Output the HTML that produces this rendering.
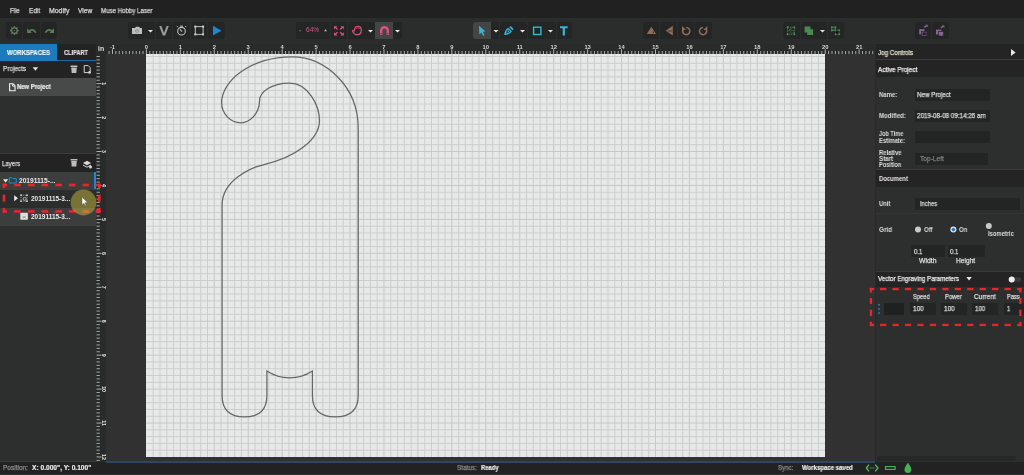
<!DOCTYPE html>
<html><head><meta charset="utf-8">
<style>
*{margin:0;padding:0;box-sizing:border-box}
html,body{width:1024px;height:475px;overflow:hidden;background:#2b2d2d;font-family:"Liberation Sans",sans-serif;}
.a{position:absolute}
.t{position:absolute;white-space:nowrap;line-height:1;font-size:7px;color:#dcdcdc;will-change:transform;z-index:5;transform-origin:0 0}
.b{font-weight:bold}
#menubar{left:0;top:0;width:1024px;height:18px;background:#212121}
#toolbar{left:0;top:18px;width:1024px;height:26px;background:#2b2d2d}
.grp{position:absolute;top:22px;height:17px;background:#242626;border-radius:3px}
.sep{position:absolute;top:22px;width:1px;height:17px;background:#2b2d2d}
.act{position:absolute;top:22px;height:17px;background:#444646}
.inp{position:absolute;background:#232424}
svg{position:absolute;overflow:visible}
</style></head><body>
<!-- MENUBAR -->
<div id="menubar" class="a"></div>

<!-- TOOLBAR -->
<div id="toolbar" class="a"></div>
<!-- group1 -->
<div class="grp" style="left:6px;width:51px"></div>
<div class="sep" style="left:22px"></div>
<div class="sep" style="left:40px"></div>
<!-- group2 -->
<div class="grp" style="left:128px;width:97px"></div>
<div class="sep" style="left:155px"></div>
<div class="sep" style="left:172px"></div>
<div class="sep" style="left:190px"></div>
<div class="sep" style="left:207px"></div>
<!-- group3 -->
<div class="grp" style="left:296px;width:106px"></div>
<div class="sep" style="left:330px"></div>
<div class="sep" style="left:347px"></div>
<div class="act" style="left:375px;width:18px"></div>
<!-- group4 -->
<div class="grp" style="left:473px;width:99px"></div>
<div class="act" style="left:473px;width:18px;border-radius:3px 0 0 3px"></div>
<div class="sep" style="left:499px"></div>
<div class="sep" style="left:527px"></div>
<div class="sep" style="left:556px"></div>
<!-- group5 -->
<div class="grp" style="left:643px;width:69px"></div>
<div class="sep" style="left:659px"></div>
<div class="sep" style="left:677px"></div>
<div class="sep" style="left:694px"></div>
<!-- group6 -->
<div class="grp" style="left:783px;width:61px"></div>
<div class="sep" style="left:800px"></div>
<div class="sep" style="left:827px"></div>
<!-- group7 -->
<div class="grp" style="left:915px;width:34px"></div>
<div class="sep" style="left:931px"></div>

<!-- toolbar icons -->
<svg style="left:0;top:0" width="1024" height="44">
 <!-- gear -->
 <g fill="#5b7d58">
  <circle cx="14.4" cy="30.6" r="3.4"/>
  <g stroke="#5b7d58" stroke-width="1.5">
   <line x1="14.4" y1="26.2" x2="14.4" y2="35"/><line x1="10" y1="30.6" x2="18.8" y2="30.6"/>
   <line x1="11.3" y1="27.5" x2="17.5" y2="33.7"/><line x1="17.5" y1="27.5" x2="11.3" y2="33.7"/>
  </g>
 </g>
 <circle cx="14.4" cy="30.6" r="2.1" fill="#242626"/>
 <circle cx="14.4" cy="30.6" r="0.7" fill="#5b7d58"/>
 <!-- undo -->
 <path d="M27.2 28.3 L27.2 32.9 L31.8 32.9 Z" fill="#5b7d58"/>
 <path d="M28.8 31.6 Q32.6 27.6 35.9 32.6" fill="none" stroke="#5b7d58" stroke-width="1.7"/>
 <!-- redo -->
 <path d="M54 28.3 L54 32.9 L49.4 32.9 Z" fill="#5b7d58"/>
 <path d="M52.4 31.6 Q48.6 27.6 45.3 32.6" fill="none" stroke="#5b7d58" stroke-width="1.7"/>
 <!-- camera -->
 <path d="M132 28 h3 l1 -1.2 h3 l1 1.2 h2 v6 h-10 z" fill="#bdbdbd"/>
 <circle cx="137" cy="31" r="1.8" fill="#8a8a8a"/><circle cx="137" cy="31" r="0.9" fill="#bdbdbd"/>
 <path d="M148 30 h5 l-2.5 2.6 z" fill="#e8e8e8"/>
 <!-- V -->
 <path d="M159.2 26 h2.2 l2.6 7 l2.6 -7 h2.2 l-3.6 9.5 h-2.4 z" fill="#9a9a9a"/>
 <!-- timer -->
 <circle cx="181.5" cy="31.2" r="3.8" fill="none" stroke="#bdbdbd" stroke-width="1.1"/>
 <line x1="182" y1="31.6" x2="180" y2="29.4" stroke="#bdbdbd" stroke-width="1.1"/>
 <line x1="180" y1="26.2" x2="183" y2="26.2" stroke="#bdbdbd" stroke-width="1"/>
 <line x1="185.2" y1="27" x2="186.2" y2="26" stroke="#bdbdbd" stroke-width="1"/>
 <line x1="177.8" y1="27" x2="176.8" y2="26" stroke="#bdbdbd" stroke-width="1"/>
 <!-- bbox -->
 <rect x="195.3" y="26.6" width="7.8" height="7.8" fill="none" stroke="#bdbdbd" stroke-width="1"/>
 <rect x="194.3" y="25.6" width="2" height="2" fill="#d0d0d0"/><rect x="202.1" y="25.6" width="2" height="2" fill="#d0d0d0"/>
 <rect x="194.3" y="33.4" width="2" height="2" fill="#d0d0d0"/><rect x="202.1" y="33.4" width="2" height="2" fill="#d0d0d0"/>
 <!-- play -->
 <path d="M213 25.8 L221.5 30.7 L213 35.6 Z" fill="#1c86d0"/>
 <!-- zoom -->
 <rect x="299.5" y="30.3" width="1.2" height="1" fill="#9a9a9a"/>
 <path d="M324 31.2 h3 l-1.5 -2 z" fill="#bdbdbd"/>
 <!-- fit -->
 <g fill="#e0527e">
  <path d="M334 26.2 h3.2 l-1 1 l1.8 1.8 l-0.9 0.9 l-1.8 -1.8 l-1.3 1.3 z"/>
  <path d="M343.8 26.2 h-3.2 l1 1 l-1.8 1.8 l0.9 0.9 l1.8 -1.8 l1.3 1.3 z"/>
  <path d="M334 35.4 h3.2 l-1 -1 l1.8 -1.8 l-0.9 -0.9 l-1.8 1.8 l-1.3 -1.3 z"/>
  <path d="M343.8 35.4 h-3.2 l1 -1 l-1.8 -1.8 l0.9 -0.9 l1.8 1.8 l1.3 -1.3 z"/>
 </g>
 <!-- hand -->
 <path d="M355.2 34.4 Q352.6 32.4 352.4 31.2 Q352.8 30 354.4 30.8 L354.6 28.6 Q355.2 26.4 357.6 26.3 Q360.8 26.4 361.2 29 L361.2 31.4 Q360.8 34.6 357.8 34.9 Z" fill="none" stroke="#e0527e" stroke-width="1.15"/><path d="M355.6 28.4 Q357.8 27.4 360.2 28.6" fill="none" stroke="#e0527e" stroke-width="0.8"/>
 <path d="M368 30 h5 l-2.5 2.6 z" fill="#e8e8e8"/>
 <!-- magnet -->
 <path d="M380 35 v-4.5 a4.5 4.5 0 0 1 9 0 v4.5 h-2.4 v-4.5 a2.1 2.1 0 0 0 -4.2 0 v4.5 z" fill="#e0527e"/>
 <circle cx="381.2" cy="33.6" r="0.6" fill="#333"/><circle cx="387.8" cy="33.6" r="0.6" fill="#333"/>
 <path d="M395 30 h5 l-2.5 2.6 z" fill="#e8e8e8"/>
 <!-- select -->
 <path d="M479 25.8 L485.5 31.5 L482.8 31.8 L484.6 35 L483 35.8 L481.3 32.6 L479.4 34.4 Z" fill="#3fb3d6"/>
 <path d="M493.5 30 h5 l-2.5 2.6 z" fill="#e8e8e8"/>
 <!-- pen -->
 <path d="M504.9 34.4 C505.3 31.6 506.4 29.6 508.2 28.5 L511.1 31.4 C510 33.2 507.8 34 504.9 34.4 Z" fill="none" stroke="#3fb3d6" stroke-width="1.3" stroke-linejoin="round"/>
 <circle cx="508.4" cy="31.2" r="0.75" fill="#3fb3d6"/>
 <line x1="505.2" y1="34.1" x2="507.9" y2="31.6" stroke="#3fb3d6" stroke-width="0.7"/>
 <path d="M509.4 27.3 L510.6 26.1 L513.6 29.1 L512.4 30.3 Z" fill="#3fb3d6"/>
 <path d="M520 30 h5 l-2.5 2.6 z" fill="#e8e8e8"/>
 <!-- rect -->
 <rect x="533.6" y="27.2" width="7.3" height="7.3" fill="none" stroke="#3fb3d6" stroke-width="1.4"/>
 <path d="M548 30 h5 l-2.5 2.6 z" fill="#e8e8e8"/>
 <!-- T -->
 <path d="M560 26.2 h7.6 v2 h-2.7 v7.2 h-2.2 v-7.2 h-2.7 z" fill="#3fb3d6"/>
 <!-- brown icons -->
 <path d="M646.8 34 L651.4 26.8 L656 34 Z" fill="#8f6c55"/><circle cx="653.4" cy="32.2" r="0.6" fill="#1e1e1e"/>
 <path d="M672.8 25.8 L665.6 30.8 L672.8 35.4 Z" fill="#8f6c55"/>
 <path d="M672.2 31 L667.6 31" stroke="#1e1e1e" stroke-width="0.6"/>
 <path d="M683.3 29 a3.6 3.6 0 1 0 3 -1.5" fill="none" stroke="#8f6c55" stroke-width="1.6"/>
 <path d="M682 26 v4 h4 z" fill="#8f6c55"/>
 <path d="M706 29 a3.6 3.6 0 1 1 -3 -1.5" fill="none" stroke="#8f6c55" stroke-width="1.6"/>
 <path d="M707.3 26 v4 h-4 z" fill="#8f6c55"/>
 <!-- green icons -->
 <g fill="#4a8a4e">
  <circle cx="787.6" cy="27.2" r="1"/><circle cx="794.4" cy="27.2" r="1"/>
  <circle cx="787.6" cy="34.2" r="1"/><circle cx="794.4" cy="34.2" r="1"/>
 </g>
 <rect x="787.6" y="27.2" width="6.8" height="7" fill="none" stroke="#4a8a4e" stroke-width="0.9" stroke-dasharray="1.4 0.9"/>
 <path d="M788.6 31 L791.4 28.2" stroke="#4a8a4e" stroke-width="1"/>
 <circle cx="792" cy="31.9" r="1.5" fill="#151515" stroke="#4a8a4e" stroke-width="0.6"/>
 <path d="M804.6 26.6 h5.8 v2.6 h2.7 v5.9 h-5.9 v-2.5 h-2.6 z" fill="#4a8a4e"/>
 <path d="M820 30 h5 l-2.5 2.6 z" fill="#e0e0e0"/>
 <g fill="#4a8a4e">
  <circle cx="831.8" cy="27.2" r="1"/><circle cx="835.4" cy="27.2" r="1"/>
  <circle cx="831.8" cy="30.6" r="1"/><circle cx="839.2" cy="30.2" r="1"/>
  <circle cx="835.6" cy="34.2" r="1"/><circle cx="839.2" cy="34.2" r="1"/>
 </g>
 <rect x="831.8" y="27.2" width="3.6" height="3.4" fill="none" stroke="#4a8a4e" stroke-width="0.8"/>
 <rect x="835.6" y="30.2" width="3.6" height="4" fill="none" stroke="#4a8a4e" stroke-width="0.8" stroke-dasharray="1 0.7"/>
 <path d="M832.6 31 L835 28.4" stroke="#4a8a4e" stroke-width="0.9"/>
 <circle cx="836.8" cy="32.2" r="1.3" fill="#151515"/>
 <!-- purple -->
 <rect x="919.2" y="29.2" width="5.2" height="5.2" fill="#8a6296"/>
 <rect x="921.6" y="31.4" width="5.2" height="4.6" fill="#8a6296" stroke="#242626" stroke-width="0.7"/>
 <rect x="922.6" y="32.4" width="3.2" height="2.6" fill="#1c1c1c"/>
 <path d="M924.2 27.4 l2.6 -1.8" stroke="#8a6296" stroke-width="1.4"/>
 <path d="M925.6 25.2 h1.8 v1.8" fill="none" stroke="#8a6296" stroke-width="0.9"/>
 <rect x="936" y="29.6" width="5.4" height="4.8" fill="#8a6296"/>
 <rect x="938.4" y="31.6" width="5.2" height="4.4" fill="#8a6296" stroke="#242626" stroke-width="0.7"/>
 <path d="M940.8 28 l2.6 -1.8" stroke="#8a6296" stroke-width="1.4"/>
 <path d="M942.2 25.8 h1.8 v1.8" fill="none" stroke="#8a6296" stroke-width="0.9"/>
</svg>

<!-- LEFT PANEL -->
<div class="a" style="left:0;top:44px;width:96px;height:417px;background:#2d2f2f"></div>
<div class="a" style="left:0;top:44px;width:57px;height:17px;background:#1b7bbd"></div>
<div class="a" style="left:57px;top:44px;width:39px;height:16px;background:#232323"></div>
<div class="a" style="left:57px;top:60px;width:39px;height:1px;background:#1b6aa0"></div>
<!-- projects header -->
<div class="a" style="left:0;top:61px;width:96px;height:17px;background:#232323"></div>
<div class="a" style="left:78px;top:78px;width:18px;height:0"></div>
<!-- new project row -->
<div class="a" style="left:0;top:78px;width:96px;height:18px;background:#484a4a"></div>
<!-- layers header -->
<div class="a" style="left:0;top:153px;width:96px;height:1px;background:#3a3c3c"></div>
<div class="a" style="left:0;top:154px;width:96px;height:18px;background:#232323"></div>
<!-- layer rows -->
<div class="a" style="left:0;top:172px;width:96px;height:18px;background:#3c3e3e"></div>
<div class="a" style="left:94px;top:172px;width:2px;height:17px;background:#1d8ad6"></div>
<div class="a" style="left:0;top:190px;width:96px;height:18px;background:#2b2d2d"></div>
<div class="a" style="left:0;top:207.5px;width:96px;height:18.3px;background:#3c3e3e"></div>

<svg style="left:0;top:44px" width="106" height="417">
 <!-- projects caret -->
 <path d="M32.6 23.2 h5.6 l-2.8 3.6 z" fill="#e0e0e0"/>
 <!-- trash -->
 <g fill="#bdbdbd"><rect x="70.5" y="21.6" width="7" height="1.4" rx="0.5"/><path d="M71.2 23.6 h5.6 l-0.5 5.4 h-4.6 z"/></g>
 <!-- new file -->
 <path d="M84.2 21.6 h4 l2 2 v5 h-6 z" fill="none" stroke="#d0d0d0" stroke-width="1"/>
 <circle cx="89.6" cy="28.4" r="1.4" fill="#d0d0d0"/>
 <!-- new project doc icon -->
 <path d="M9.6 39.8 h3.4 l2 2 v4.9 h-5.4 z" fill="none" stroke="#f0f0f0" stroke-width="1.1"/><path d="M12.6 39.8 v2.4 h2.4" fill="none" stroke="#f0f0f0" stroke-width="0.8"/>
 <!-- layers header icons -->
 <g fill="#bdbdbd"><rect x="70.5" y="115" width="7" height="1.4" rx="0.5"/><path d="M71.2 117 h5.6 l-0.5 5.4 h-4.6 z"/></g>
 <path d="M83 119 l4 -2.2 l4 2.2 l-4 2.2 z" fill="#d8d8d8"/>
 <path d="M83 121 l4 2.2 l4 -2.2" fill="none" stroke="#d8d8d8" stroke-width="1"/>
 <circle cx="90.5" cy="123" r="1.5" fill="#d8d8d8"/>
 <!-- row1 caret + folder -->
 <path d="M3 135.2 h5.2 l-2.6 3.3 z" fill="#e8e8e8"/>
 <path d="M9.3 133.7 h2.6 l0.9 0.9 h3.5 v4.4 h-7 z" fill="none" stroke="#1d8ad6" stroke-width="1"/>
 <!-- row2 caret + icon -->
 <path d="M14.2 151.2 v6 l3.8 -3 z" fill="#e8e8e8"/>
 <g fill="#cfcfcf">
  <rect x="20.2" y="150.4" width="1.6" height="1.6"/><rect x="26.2" y="150.4" width="1.6" height="1.6"/>
  <rect x="20.2" y="156.4" width="1.6" height="1.6"/><rect x="26.2" y="156.4" width="1.6" height="1.6"/>
 </g>
 <rect x="21" y="151.2" width="6" height="6" fill="none" stroke="#cfcfcf" stroke-width="0.7" stroke-dasharray="1 0.9"/>
 <circle cx="24.6" cy="154.8" r="1.5" fill="none" stroke="#cfcfcf" stroke-width="0.8"/>
 <!-- row3 icon -->
 <rect x="20.3" y="168.8" width="7.6" height="6.9" rx="0.6" fill="#e0e0e0"/>
 <rect x="22.6" y="172.6" width="3" height="1" fill="#777"/>
</svg>

<!-- red dashed box left -->
<svg style="left:0;top:0;z-index:11" width="110" height="475">
  <circle cx="83.5" cy="202.5" r="12.9" fill="#d6c440" fill-opacity="0.46"/>
 <path d="M82 197 v8 l1.9 -1.8 l1.2 2.6 l1 -0.5 l-1.2 -2.5 l2.6 -0.2 z" fill="#ffffff" stroke="#444" stroke-width="0.4"/>
</svg>

<!-- CANVAS AREA -->
<div class="a" style="left:106px;top:54px;width:769px;height:407px;background:#313131"></div>
<div class="a" style="left:106px;top:461px;width:769px;height:2px;background:#2f4662"></div>
<div class="a" style="left:0;top:461px;width:96px;height:1px;background:#3a3b3b"></div>
<!-- rulers -->
<div class="a" style="left:96px;top:44px;width:779px;height:10px;background:#292a2a"></div>
<div class="a" style="left:96px;top:54px;width:10px;height:407px;background:#292a2a"></div>
<svg style="left:106px;top:44px;will-change:transform" width="769" height="10" font-size="5.8" font-weight="bold" fill="#d4d4d4" font-family="Liberation Sans">
<line x1="3.07" y1="7" x2="3.07" y2="10" stroke="#a8a8a8" stroke-width="1"/>
<line x1="6.46" y1="5.3" x2="6.46" y2="10" stroke="#b4b4b4" stroke-width="1"/>
<text x="6.46" y="4.6" text-anchor="middle">-1</text>
<line x1="9.85" y1="7" x2="9.85" y2="10" stroke="#a8a8a8" stroke-width="1"/>
<line x1="13.25" y1="7" x2="13.25" y2="10" stroke="#a8a8a8" stroke-width="1"/>
<line x1="16.64" y1="7" x2="16.64" y2="10" stroke="#a8a8a8" stroke-width="1"/>
<line x1="20.04" y1="7" x2="20.04" y2="10" stroke="#a8a8a8" stroke-width="1"/>
<line x1="23.43" y1="7" x2="23.43" y2="10" stroke="#a8a8a8" stroke-width="1"/>
<line x1="26.82" y1="7" x2="26.82" y2="10" stroke="#a8a8a8" stroke-width="1"/>
<line x1="30.22" y1="7" x2="30.22" y2="10" stroke="#a8a8a8" stroke-width="1"/>
<line x1="33.61" y1="7" x2="33.61" y2="10" stroke="#a8a8a8" stroke-width="1"/>
<line x1="37.01" y1="7" x2="37.01" y2="10" stroke="#a8a8a8" stroke-width="1"/>
<line x1="40.4" y1="5.3" x2="40.4" y2="10" stroke="#b4b4b4" stroke-width="1"/>
<text x="40.4" y="4.6" text-anchor="middle">0</text>
<line x1="43.79" y1="7" x2="43.79" y2="10" stroke="#a8a8a8" stroke-width="1"/>
<line x1="47.19" y1="7" x2="47.19" y2="10" stroke="#a8a8a8" stroke-width="1"/>
<line x1="50.58" y1="7" x2="50.58" y2="10" stroke="#a8a8a8" stroke-width="1"/>
<line x1="53.98" y1="7" x2="53.98" y2="10" stroke="#a8a8a8" stroke-width="1"/>
<line x1="57.37" y1="7" x2="57.37" y2="10" stroke="#a8a8a8" stroke-width="1"/>
<line x1="60.76" y1="7" x2="60.76" y2="10" stroke="#a8a8a8" stroke-width="1"/>
<line x1="64.16" y1="7" x2="64.16" y2="10" stroke="#a8a8a8" stroke-width="1"/>
<line x1="67.55" y1="7" x2="67.55" y2="10" stroke="#a8a8a8" stroke-width="1"/>
<line x1="70.95" y1="7" x2="70.95" y2="10" stroke="#a8a8a8" stroke-width="1"/>
<line x1="74.34" y1="5.3" x2="74.34" y2="10" stroke="#b4b4b4" stroke-width="1"/>
<text x="74.34" y="4.6" text-anchor="middle">1</text>
<line x1="77.73" y1="7" x2="77.73" y2="10" stroke="#a8a8a8" stroke-width="1"/>
<line x1="81.13" y1="7" x2="81.13" y2="10" stroke="#a8a8a8" stroke-width="1"/>
<line x1="84.52" y1="7" x2="84.52" y2="10" stroke="#a8a8a8" stroke-width="1"/>
<line x1="87.92" y1="7" x2="87.92" y2="10" stroke="#a8a8a8" stroke-width="1"/>
<line x1="91.31" y1="7" x2="91.31" y2="10" stroke="#a8a8a8" stroke-width="1"/>
<line x1="94.7" y1="7" x2="94.7" y2="10" stroke="#a8a8a8" stroke-width="1"/>
<line x1="98.1" y1="7" x2="98.1" y2="10" stroke="#a8a8a8" stroke-width="1"/>
<line x1="101.49" y1="7" x2="101.49" y2="10" stroke="#a8a8a8" stroke-width="1"/>
<line x1="104.89" y1="7" x2="104.89" y2="10" stroke="#a8a8a8" stroke-width="1"/>
<line x1="108.28" y1="5.3" x2="108.28" y2="10" stroke="#b4b4b4" stroke-width="1"/>
<text x="108.28" y="4.6" text-anchor="middle">2</text>
<line x1="111.67" y1="7" x2="111.67" y2="10" stroke="#a8a8a8" stroke-width="1"/>
<line x1="115.07" y1="7" x2="115.07" y2="10" stroke="#a8a8a8" stroke-width="1"/>
<line x1="118.46" y1="7" x2="118.46" y2="10" stroke="#a8a8a8" stroke-width="1"/>
<line x1="121.86" y1="7" x2="121.86" y2="10" stroke="#a8a8a8" stroke-width="1"/>
<line x1="125.25" y1="7" x2="125.25" y2="10" stroke="#a8a8a8" stroke-width="1"/>
<line x1="128.64" y1="7" x2="128.64" y2="10" stroke="#a8a8a8" stroke-width="1"/>
<line x1="132.04" y1="7" x2="132.04" y2="10" stroke="#a8a8a8" stroke-width="1"/>
<line x1="135.43" y1="7" x2="135.43" y2="10" stroke="#a8a8a8" stroke-width="1"/>
<line x1="138.83" y1="7" x2="138.83" y2="10" stroke="#a8a8a8" stroke-width="1"/>
<line x1="142.22" y1="5.3" x2="142.22" y2="10" stroke="#b4b4b4" stroke-width="1"/>
<text x="142.22" y="4.6" text-anchor="middle">3</text>
<line x1="145.61" y1="7" x2="145.61" y2="10" stroke="#a8a8a8" stroke-width="1"/>
<line x1="149.01" y1="7" x2="149.01" y2="10" stroke="#a8a8a8" stroke-width="1"/>
<line x1="152.4" y1="7" x2="152.4" y2="10" stroke="#a8a8a8" stroke-width="1"/>
<line x1="155.8" y1="7" x2="155.8" y2="10" stroke="#a8a8a8" stroke-width="1"/>
<line x1="159.19" y1="7" x2="159.19" y2="10" stroke="#a8a8a8" stroke-width="1"/>
<line x1="162.58" y1="7" x2="162.58" y2="10" stroke="#a8a8a8" stroke-width="1"/>
<line x1="165.98" y1="7" x2="165.98" y2="10" stroke="#a8a8a8" stroke-width="1"/>
<line x1="169.37" y1="7" x2="169.37" y2="10" stroke="#a8a8a8" stroke-width="1"/>
<line x1="172.77" y1="7" x2="172.77" y2="10" stroke="#a8a8a8" stroke-width="1"/>
<line x1="176.16" y1="5.3" x2="176.16" y2="10" stroke="#b4b4b4" stroke-width="1"/>
<text x="176.16" y="4.6" text-anchor="middle">4</text>
<line x1="179.55" y1="7" x2="179.55" y2="10" stroke="#a8a8a8" stroke-width="1"/>
<line x1="182.95" y1="7" x2="182.95" y2="10" stroke="#a8a8a8" stroke-width="1"/>
<line x1="186.34" y1="7" x2="186.34" y2="10" stroke="#a8a8a8" stroke-width="1"/>
<line x1="189.74" y1="7" x2="189.74" y2="10" stroke="#a8a8a8" stroke-width="1"/>
<line x1="193.13" y1="7" x2="193.13" y2="10" stroke="#a8a8a8" stroke-width="1"/>
<line x1="196.52" y1="7" x2="196.52" y2="10" stroke="#a8a8a8" stroke-width="1"/>
<line x1="199.92" y1="7" x2="199.92" y2="10" stroke="#a8a8a8" stroke-width="1"/>
<line x1="203.31" y1="7" x2="203.31" y2="10" stroke="#a8a8a8" stroke-width="1"/>
<line x1="206.71" y1="7" x2="206.71" y2="10" stroke="#a8a8a8" stroke-width="1"/>
<line x1="210.1" y1="5.3" x2="210.1" y2="10" stroke="#b4b4b4" stroke-width="1"/>
<text x="210.1" y="4.6" text-anchor="middle">5</text>
<line x1="213.49" y1="7" x2="213.49" y2="10" stroke="#a8a8a8" stroke-width="1"/>
<line x1="216.89" y1="7" x2="216.89" y2="10" stroke="#a8a8a8" stroke-width="1"/>
<line x1="220.28" y1="7" x2="220.28" y2="10" stroke="#a8a8a8" stroke-width="1"/>
<line x1="223.68" y1="7" x2="223.68" y2="10" stroke="#a8a8a8" stroke-width="1"/>
<line x1="227.07" y1="7" x2="227.07" y2="10" stroke="#a8a8a8" stroke-width="1"/>
<line x1="230.46" y1="7" x2="230.46" y2="10" stroke="#a8a8a8" stroke-width="1"/>
<line x1="233.86" y1="7" x2="233.86" y2="10" stroke="#a8a8a8" stroke-width="1"/>
<line x1="237.25" y1="7" x2="237.25" y2="10" stroke="#a8a8a8" stroke-width="1"/>
<line x1="240.65" y1="7" x2="240.65" y2="10" stroke="#a8a8a8" stroke-width="1"/>
<line x1="244.04" y1="5.3" x2="244.04" y2="10" stroke="#b4b4b4" stroke-width="1"/>
<text x="244.04" y="4.6" text-anchor="middle">6</text>
<line x1="247.43" y1="7" x2="247.43" y2="10" stroke="#a8a8a8" stroke-width="1"/>
<line x1="250.83" y1="7" x2="250.83" y2="10" stroke="#a8a8a8" stroke-width="1"/>
<line x1="254.22" y1="7" x2="254.22" y2="10" stroke="#a8a8a8" stroke-width="1"/>
<line x1="257.62" y1="7" x2="257.62" y2="10" stroke="#a8a8a8" stroke-width="1"/>
<line x1="261.01" y1="7" x2="261.01" y2="10" stroke="#a8a8a8" stroke-width="1"/>
<line x1="264.4" y1="7" x2="264.4" y2="10" stroke="#a8a8a8" stroke-width="1"/>
<line x1="267.8" y1="7" x2="267.8" y2="10" stroke="#a8a8a8" stroke-width="1"/>
<line x1="271.19" y1="7" x2="271.19" y2="10" stroke="#a8a8a8" stroke-width="1"/>
<line x1="274.59" y1="7" x2="274.59" y2="10" stroke="#a8a8a8" stroke-width="1"/>
<line x1="277.98" y1="5.3" x2="277.98" y2="10" stroke="#b4b4b4" stroke-width="1"/>
<text x="277.98" y="4.6" text-anchor="middle">7</text>
<line x1="281.37" y1="7" x2="281.37" y2="10" stroke="#a8a8a8" stroke-width="1"/>
<line x1="284.77" y1="7" x2="284.77" y2="10" stroke="#a8a8a8" stroke-width="1"/>
<line x1="288.16" y1="7" x2="288.16" y2="10" stroke="#a8a8a8" stroke-width="1"/>
<line x1="291.56" y1="7" x2="291.56" y2="10" stroke="#a8a8a8" stroke-width="1"/>
<line x1="294.95" y1="7" x2="294.95" y2="10" stroke="#a8a8a8" stroke-width="1"/>
<line x1="298.34" y1="7" x2="298.34" y2="10" stroke="#a8a8a8" stroke-width="1"/>
<line x1="301.74" y1="7" x2="301.74" y2="10" stroke="#a8a8a8" stroke-width="1"/>
<line x1="305.13" y1="7" x2="305.13" y2="10" stroke="#a8a8a8" stroke-width="1"/>
<line x1="308.53" y1="7" x2="308.53" y2="10" stroke="#a8a8a8" stroke-width="1"/>
<line x1="311.92" y1="5.3" x2="311.92" y2="10" stroke="#b4b4b4" stroke-width="1"/>
<text x="311.92" y="4.6" text-anchor="middle">8</text>
<line x1="315.31" y1="7" x2="315.31" y2="10" stroke="#a8a8a8" stroke-width="1"/>
<line x1="318.71" y1="7" x2="318.71" y2="10" stroke="#a8a8a8" stroke-width="1"/>
<line x1="322.1" y1="7" x2="322.1" y2="10" stroke="#a8a8a8" stroke-width="1"/>
<line x1="325.5" y1="7" x2="325.5" y2="10" stroke="#a8a8a8" stroke-width="1"/>
<line x1="328.89" y1="7" x2="328.89" y2="10" stroke="#a8a8a8" stroke-width="1"/>
<line x1="332.28" y1="7" x2="332.28" y2="10" stroke="#a8a8a8" stroke-width="1"/>
<line x1="335.68" y1="7" x2="335.68" y2="10" stroke="#a8a8a8" stroke-width="1"/>
<line x1="339.07" y1="7" x2="339.07" y2="10" stroke="#a8a8a8" stroke-width="1"/>
<line x1="342.47" y1="7" x2="342.47" y2="10" stroke="#a8a8a8" stroke-width="1"/>
<line x1="345.86" y1="5.3" x2="345.86" y2="10" stroke="#b4b4b4" stroke-width="1"/>
<text x="345.86" y="4.6" text-anchor="middle">9</text>
<line x1="349.25" y1="7" x2="349.25" y2="10" stroke="#a8a8a8" stroke-width="1"/>
<line x1="352.65" y1="7" x2="352.65" y2="10" stroke="#a8a8a8" stroke-width="1"/>
<line x1="356.04" y1="7" x2="356.04" y2="10" stroke="#a8a8a8" stroke-width="1"/>
<line x1="359.44" y1="7" x2="359.44" y2="10" stroke="#a8a8a8" stroke-width="1"/>
<line x1="362.83" y1="7" x2="362.83" y2="10" stroke="#a8a8a8" stroke-width="1"/>
<line x1="366.22" y1="7" x2="366.22" y2="10" stroke="#a8a8a8" stroke-width="1"/>
<line x1="369.62" y1="7" x2="369.62" y2="10" stroke="#a8a8a8" stroke-width="1"/>
<line x1="373.01" y1="7" x2="373.01" y2="10" stroke="#a8a8a8" stroke-width="1"/>
<line x1="376.41" y1="7" x2="376.41" y2="10" stroke="#a8a8a8" stroke-width="1"/>
<line x1="379.8" y1="5.3" x2="379.8" y2="10" stroke="#b4b4b4" stroke-width="1"/>
<text x="379.8" y="4.6" text-anchor="middle">10</text>
<line x1="383.19" y1="7" x2="383.19" y2="10" stroke="#a8a8a8" stroke-width="1"/>
<line x1="386.59" y1="7" x2="386.59" y2="10" stroke="#a8a8a8" stroke-width="1"/>
<line x1="389.98" y1="7" x2="389.98" y2="10" stroke="#a8a8a8" stroke-width="1"/>
<line x1="393.38" y1="7" x2="393.38" y2="10" stroke="#a8a8a8" stroke-width="1"/>
<line x1="396.77" y1="7" x2="396.77" y2="10" stroke="#a8a8a8" stroke-width="1"/>
<line x1="400.16" y1="7" x2="400.16" y2="10" stroke="#a8a8a8" stroke-width="1"/>
<line x1="403.56" y1="7" x2="403.56" y2="10" stroke="#a8a8a8" stroke-width="1"/>
<line x1="406.95" y1="7" x2="406.95" y2="10" stroke="#a8a8a8" stroke-width="1"/>
<line x1="410.35" y1="7" x2="410.35" y2="10" stroke="#a8a8a8" stroke-width="1"/>
<line x1="413.74" y1="5.3" x2="413.74" y2="10" stroke="#b4b4b4" stroke-width="1"/>
<text x="413.74" y="4.6" text-anchor="middle">11</text>
<line x1="417.13" y1="7" x2="417.13" y2="10" stroke="#a8a8a8" stroke-width="1"/>
<line x1="420.53" y1="7" x2="420.53" y2="10" stroke="#a8a8a8" stroke-width="1"/>
<line x1="423.92" y1="7" x2="423.92" y2="10" stroke="#a8a8a8" stroke-width="1"/>
<line x1="427.32" y1="7" x2="427.32" y2="10" stroke="#a8a8a8" stroke-width="1"/>
<line x1="430.71" y1="7" x2="430.71" y2="10" stroke="#a8a8a8" stroke-width="1"/>
<line x1="434.1" y1="7" x2="434.1" y2="10" stroke="#a8a8a8" stroke-width="1"/>
<line x1="437.5" y1="7" x2="437.5" y2="10" stroke="#a8a8a8" stroke-width="1"/>
<line x1="440.89" y1="7" x2="440.89" y2="10" stroke="#a8a8a8" stroke-width="1"/>
<line x1="444.29" y1="7" x2="444.29" y2="10" stroke="#a8a8a8" stroke-width="1"/>
<line x1="447.68" y1="5.3" x2="447.68" y2="10" stroke="#b4b4b4" stroke-width="1"/>
<text x="447.68" y="4.6" text-anchor="middle">12</text>
<line x1="451.07" y1="7" x2="451.07" y2="10" stroke="#a8a8a8" stroke-width="1"/>
<line x1="454.47" y1="7" x2="454.47" y2="10" stroke="#a8a8a8" stroke-width="1"/>
<line x1="457.86" y1="7" x2="457.86" y2="10" stroke="#a8a8a8" stroke-width="1"/>
<line x1="461.26" y1="7" x2="461.26" y2="10" stroke="#a8a8a8" stroke-width="1"/>
<line x1="464.65" y1="7" x2="464.65" y2="10" stroke="#a8a8a8" stroke-width="1"/>
<line x1="468.04" y1="7" x2="468.04" y2="10" stroke="#a8a8a8" stroke-width="1"/>
<line x1="471.44" y1="7" x2="471.44" y2="10" stroke="#a8a8a8" stroke-width="1"/>
<line x1="474.83" y1="7" x2="474.83" y2="10" stroke="#a8a8a8" stroke-width="1"/>
<line x1="478.23" y1="7" x2="478.23" y2="10" stroke="#a8a8a8" stroke-width="1"/>
<line x1="481.62" y1="5.3" x2="481.62" y2="10" stroke="#b4b4b4" stroke-width="1"/>
<text x="481.62" y="4.6" text-anchor="middle">13</text>
<line x1="485.01" y1="7" x2="485.01" y2="10" stroke="#a8a8a8" stroke-width="1"/>
<line x1="488.41" y1="7" x2="488.41" y2="10" stroke="#a8a8a8" stroke-width="1"/>
<line x1="491.8" y1="7" x2="491.8" y2="10" stroke="#a8a8a8" stroke-width="1"/>
<line x1="495.2" y1="7" x2="495.2" y2="10" stroke="#a8a8a8" stroke-width="1"/>
<line x1="498.59" y1="7" x2="498.59" y2="10" stroke="#a8a8a8" stroke-width="1"/>
<line x1="501.98" y1="7" x2="501.98" y2="10" stroke="#a8a8a8" stroke-width="1"/>
<line x1="505.38" y1="7" x2="505.38" y2="10" stroke="#a8a8a8" stroke-width="1"/>
<line x1="508.77" y1="7" x2="508.77" y2="10" stroke="#a8a8a8" stroke-width="1"/>
<line x1="512.17" y1="7" x2="512.17" y2="10" stroke="#a8a8a8" stroke-width="1"/>
<line x1="515.56" y1="5.3" x2="515.56" y2="10" stroke="#b4b4b4" stroke-width="1"/>
<text x="515.56" y="4.6" text-anchor="middle">14</text>
<line x1="518.95" y1="7" x2="518.95" y2="10" stroke="#a8a8a8" stroke-width="1"/>
<line x1="522.35" y1="7" x2="522.35" y2="10" stroke="#a8a8a8" stroke-width="1"/>
<line x1="525.74" y1="7" x2="525.74" y2="10" stroke="#a8a8a8" stroke-width="1"/>
<line x1="529.14" y1="7" x2="529.14" y2="10" stroke="#a8a8a8" stroke-width="1"/>
<line x1="532.53" y1="7" x2="532.53" y2="10" stroke="#a8a8a8" stroke-width="1"/>
<line x1="535.92" y1="7" x2="535.92" y2="10" stroke="#a8a8a8" stroke-width="1"/>
<line x1="539.32" y1="7" x2="539.32" y2="10" stroke="#a8a8a8" stroke-width="1"/>
<line x1="542.71" y1="7" x2="542.71" y2="10" stroke="#a8a8a8" stroke-width="1"/>
<line x1="546.11" y1="7" x2="546.11" y2="10" stroke="#a8a8a8" stroke-width="1"/>
<line x1="549.5" y1="5.3" x2="549.5" y2="10" stroke="#b4b4b4" stroke-width="1"/>
<text x="549.5" y="4.6" text-anchor="middle">15</text>
<line x1="552.89" y1="7" x2="552.89" y2="10" stroke="#a8a8a8" stroke-width="1"/>
<line x1="556.29" y1="7" x2="556.29" y2="10" stroke="#a8a8a8" stroke-width="1"/>
<line x1="559.68" y1="7" x2="559.68" y2="10" stroke="#a8a8a8" stroke-width="1"/>
<line x1="563.08" y1="7" x2="563.08" y2="10" stroke="#a8a8a8" stroke-width="1"/>
<line x1="566.47" y1="7" x2="566.47" y2="10" stroke="#a8a8a8" stroke-width="1"/>
<line x1="569.86" y1="7" x2="569.86" y2="10" stroke="#a8a8a8" stroke-width="1"/>
<line x1="573.26" y1="7" x2="573.26" y2="10" stroke="#a8a8a8" stroke-width="1"/>
<line x1="576.65" y1="7" x2="576.65" y2="10" stroke="#a8a8a8" stroke-width="1"/>
<line x1="580.05" y1="7" x2="580.05" y2="10" stroke="#a8a8a8" stroke-width="1"/>
<line x1="583.44" y1="5.3" x2="583.44" y2="10" stroke="#b4b4b4" stroke-width="1"/>
<text x="583.44" y="4.6" text-anchor="middle">16</text>
<line x1="586.83" y1="7" x2="586.83" y2="10" stroke="#a8a8a8" stroke-width="1"/>
<line x1="590.23" y1="7" x2="590.23" y2="10" stroke="#a8a8a8" stroke-width="1"/>
<line x1="593.62" y1="7" x2="593.62" y2="10" stroke="#a8a8a8" stroke-width="1"/>
<line x1="597.02" y1="7" x2="597.02" y2="10" stroke="#a8a8a8" stroke-width="1"/>
<line x1="600.41" y1="7" x2="600.41" y2="10" stroke="#a8a8a8" stroke-width="1"/>
<line x1="603.8" y1="7" x2="603.8" y2="10" stroke="#a8a8a8" stroke-width="1"/>
<line x1="607.2" y1="7" x2="607.2" y2="10" stroke="#a8a8a8" stroke-width="1"/>
<line x1="610.59" y1="7" x2="610.59" y2="10" stroke="#a8a8a8" stroke-width="1"/>
<line x1="613.99" y1="7" x2="613.99" y2="10" stroke="#a8a8a8" stroke-width="1"/>
<line x1="617.38" y1="5.3" x2="617.38" y2="10" stroke="#b4b4b4" stroke-width="1"/>
<text x="617.38" y="4.6" text-anchor="middle">17</text>
<line x1="620.77" y1="7" x2="620.77" y2="10" stroke="#a8a8a8" stroke-width="1"/>
<line x1="624.17" y1="7" x2="624.17" y2="10" stroke="#a8a8a8" stroke-width="1"/>
<line x1="627.56" y1="7" x2="627.56" y2="10" stroke="#a8a8a8" stroke-width="1"/>
<line x1="630.96" y1="7" x2="630.96" y2="10" stroke="#a8a8a8" stroke-width="1"/>
<line x1="634.35" y1="7" x2="634.35" y2="10" stroke="#a8a8a8" stroke-width="1"/>
<line x1="637.74" y1="7" x2="637.74" y2="10" stroke="#a8a8a8" stroke-width="1"/>
<line x1="641.14" y1="7" x2="641.14" y2="10" stroke="#a8a8a8" stroke-width="1"/>
<line x1="644.53" y1="7" x2="644.53" y2="10" stroke="#a8a8a8" stroke-width="1"/>
<line x1="647.93" y1="7" x2="647.93" y2="10" stroke="#a8a8a8" stroke-width="1"/>
<line x1="651.32" y1="5.3" x2="651.32" y2="10" stroke="#b4b4b4" stroke-width="1"/>
<text x="651.32" y="4.6" text-anchor="middle">18</text>
<line x1="654.71" y1="7" x2="654.71" y2="10" stroke="#a8a8a8" stroke-width="1"/>
<line x1="658.11" y1="7" x2="658.11" y2="10" stroke="#a8a8a8" stroke-width="1"/>
<line x1="661.5" y1="7" x2="661.5" y2="10" stroke="#a8a8a8" stroke-width="1"/>
<line x1="664.9" y1="7" x2="664.9" y2="10" stroke="#a8a8a8" stroke-width="1"/>
<line x1="668.29" y1="7" x2="668.29" y2="10" stroke="#a8a8a8" stroke-width="1"/>
<line x1="671.68" y1="7" x2="671.68" y2="10" stroke="#a8a8a8" stroke-width="1"/>
<line x1="675.08" y1="7" x2="675.08" y2="10" stroke="#a8a8a8" stroke-width="1"/>
<line x1="678.47" y1="7" x2="678.47" y2="10" stroke="#a8a8a8" stroke-width="1"/>
<line x1="681.87" y1="7" x2="681.87" y2="10" stroke="#a8a8a8" stroke-width="1"/>
<line x1="685.26" y1="5.3" x2="685.26" y2="10" stroke="#b4b4b4" stroke-width="1"/>
<text x="685.26" y="4.6" text-anchor="middle">19</text>
<line x1="688.65" y1="7" x2="688.65" y2="10" stroke="#a8a8a8" stroke-width="1"/>
<line x1="692.05" y1="7" x2="692.05" y2="10" stroke="#a8a8a8" stroke-width="1"/>
<line x1="695.44" y1="7" x2="695.44" y2="10" stroke="#a8a8a8" stroke-width="1"/>
<line x1="698.84" y1="7" x2="698.84" y2="10" stroke="#a8a8a8" stroke-width="1"/>
<line x1="702.23" y1="7" x2="702.23" y2="10" stroke="#a8a8a8" stroke-width="1"/>
<line x1="705.62" y1="7" x2="705.62" y2="10" stroke="#a8a8a8" stroke-width="1"/>
<line x1="709.02" y1="7" x2="709.02" y2="10" stroke="#a8a8a8" stroke-width="1"/>
<line x1="712.41" y1="7" x2="712.41" y2="10" stroke="#a8a8a8" stroke-width="1"/>
<line x1="715.81" y1="7" x2="715.81" y2="10" stroke="#a8a8a8" stroke-width="1"/>
<line x1="719.2" y1="5.3" x2="719.2" y2="10" stroke="#b4b4b4" stroke-width="1"/>
<text x="719.2" y="4.6" text-anchor="middle">20</text>
<line x1="722.59" y1="7" x2="722.59" y2="10" stroke="#a8a8a8" stroke-width="1"/>
<line x1="725.99" y1="7" x2="725.99" y2="10" stroke="#a8a8a8" stroke-width="1"/>
<line x1="729.38" y1="7" x2="729.38" y2="10" stroke="#a8a8a8" stroke-width="1"/>
<line x1="732.78" y1="7" x2="732.78" y2="10" stroke="#a8a8a8" stroke-width="1"/>
<line x1="736.17" y1="7" x2="736.17" y2="10" stroke="#a8a8a8" stroke-width="1"/>
<line x1="739.56" y1="7" x2="739.56" y2="10" stroke="#a8a8a8" stroke-width="1"/>
<line x1="742.96" y1="7" x2="742.96" y2="10" stroke="#a8a8a8" stroke-width="1"/>
<line x1="746.35" y1="7" x2="746.35" y2="10" stroke="#a8a8a8" stroke-width="1"/>
<line x1="749.75" y1="7" x2="749.75" y2="10" stroke="#a8a8a8" stroke-width="1"/>
<line x1="753.14" y1="5.3" x2="753.14" y2="10" stroke="#b4b4b4" stroke-width="1"/>
<text x="753.14" y="4.6" text-anchor="middle">21</text>
<line x1="756.53" y1="7" x2="756.53" y2="10" stroke="#a8a8a8" stroke-width="1"/>
<line x1="759.93" y1="7" x2="759.93" y2="10" stroke="#a8a8a8" stroke-width="1"/>
<line x1="763.32" y1="7" x2="763.32" y2="10" stroke="#a8a8a8" stroke-width="1"/>
<line x1="766.72" y1="7" x2="766.72" y2="10" stroke="#a8a8a8" stroke-width="1"/>
</svg>
<svg style="left:96px;top:54px;will-change:transform" width="12" height="407" font-size="5.2" font-weight="bold" fill="#e4e4e4" font-family="Liberation Sans">
<line x1="0.5" y1="2.49" x2="3.8" y2="2.49" stroke="#a8a8a8" stroke-width="1"/>
<line x1="0.5" y1="5.88" x2="3.8" y2="5.88" stroke="#a8a8a8" stroke-width="1"/>
<line x1="0.5" y1="9.28" x2="3.8" y2="9.28" stroke="#a8a8a8" stroke-width="1"/>
<line x1="0.5" y1="12.67" x2="3.8" y2="12.67" stroke="#a8a8a8" stroke-width="1"/>
<line x1="0.5" y1="16.06" x2="3.8" y2="16.06" stroke="#a8a8a8" stroke-width="1"/>
<line x1="0.5" y1="19.46" x2="3.8" y2="19.46" stroke="#a8a8a8" stroke-width="1"/>
<line x1="0.5" y1="22.85" x2="3.8" y2="22.85" stroke="#a8a8a8" stroke-width="1"/>
<line x1="0.5" y1="26.25" x2="3.8" y2="26.25" stroke="#a8a8a8" stroke-width="1"/>
<line x1="0.5" y1="29.64" x2="5.5" y2="29.64" stroke="#b4b4b4" stroke-width="1"/>
<text x="0" y="0" transform="translate(6.1,29.64) rotate(90)" text-anchor="middle">1</text>
<line x1="0.5" y1="33.03" x2="3.8" y2="33.03" stroke="#a8a8a8" stroke-width="1"/>
<line x1="0.5" y1="36.43" x2="3.8" y2="36.43" stroke="#a8a8a8" stroke-width="1"/>
<line x1="0.5" y1="39.82" x2="3.8" y2="39.82" stroke="#a8a8a8" stroke-width="1"/>
<line x1="0.5" y1="43.22" x2="3.8" y2="43.22" stroke="#a8a8a8" stroke-width="1"/>
<line x1="0.5" y1="46.61" x2="3.8" y2="46.61" stroke="#a8a8a8" stroke-width="1"/>
<line x1="0.5" y1="50" x2="3.8" y2="50" stroke="#a8a8a8" stroke-width="1"/>
<line x1="0.5" y1="53.4" x2="3.8" y2="53.4" stroke="#a8a8a8" stroke-width="1"/>
<line x1="0.5" y1="56.79" x2="3.8" y2="56.79" stroke="#a8a8a8" stroke-width="1"/>
<line x1="0.5" y1="60.19" x2="3.8" y2="60.19" stroke="#a8a8a8" stroke-width="1"/>
<line x1="0.5" y1="63.58" x2="5.5" y2="63.58" stroke="#b4b4b4" stroke-width="1"/>
<text x="0" y="0" transform="translate(6.1,63.58) rotate(90)" text-anchor="middle">2</text>
<line x1="0.5" y1="66.97" x2="3.8" y2="66.97" stroke="#a8a8a8" stroke-width="1"/>
<line x1="0.5" y1="70.37" x2="3.8" y2="70.37" stroke="#a8a8a8" stroke-width="1"/>
<line x1="0.5" y1="73.76" x2="3.8" y2="73.76" stroke="#a8a8a8" stroke-width="1"/>
<line x1="0.5" y1="77.16" x2="3.8" y2="77.16" stroke="#a8a8a8" stroke-width="1"/>
<line x1="0.5" y1="80.55" x2="3.8" y2="80.55" stroke="#a8a8a8" stroke-width="1"/>
<line x1="0.5" y1="83.94" x2="3.8" y2="83.94" stroke="#a8a8a8" stroke-width="1"/>
<line x1="0.5" y1="87.34" x2="3.8" y2="87.34" stroke="#a8a8a8" stroke-width="1"/>
<line x1="0.5" y1="90.73" x2="3.8" y2="90.73" stroke="#a8a8a8" stroke-width="1"/>
<line x1="0.5" y1="94.13" x2="3.8" y2="94.13" stroke="#a8a8a8" stroke-width="1"/>
<line x1="0.5" y1="97.52" x2="5.5" y2="97.52" stroke="#b4b4b4" stroke-width="1"/>
<text x="0" y="0" transform="translate(6.1,97.52) rotate(90)" text-anchor="middle">3</text>
<line x1="0.5" y1="100.91" x2="3.8" y2="100.91" stroke="#a8a8a8" stroke-width="1"/>
<line x1="0.5" y1="104.31" x2="3.8" y2="104.31" stroke="#a8a8a8" stroke-width="1"/>
<line x1="0.5" y1="107.7" x2="3.8" y2="107.7" stroke="#a8a8a8" stroke-width="1"/>
<line x1="0.5" y1="111.1" x2="3.8" y2="111.1" stroke="#a8a8a8" stroke-width="1"/>
<line x1="0.5" y1="114.49" x2="3.8" y2="114.49" stroke="#a8a8a8" stroke-width="1"/>
<line x1="0.5" y1="117.88" x2="3.8" y2="117.88" stroke="#a8a8a8" stroke-width="1"/>
<line x1="0.5" y1="121.28" x2="3.8" y2="121.28" stroke="#a8a8a8" stroke-width="1"/>
<line x1="0.5" y1="124.67" x2="3.8" y2="124.67" stroke="#a8a8a8" stroke-width="1"/>
<line x1="0.5" y1="128.07" x2="3.8" y2="128.07" stroke="#a8a8a8" stroke-width="1"/>
<line x1="0.5" y1="131.46" x2="5.5" y2="131.46" stroke="#b4b4b4" stroke-width="1"/>
<text x="0" y="0" transform="translate(6.1,131.46) rotate(90)" text-anchor="middle">4</text>
<line x1="0.5" y1="134.85" x2="3.8" y2="134.85" stroke="#a8a8a8" stroke-width="1"/>
<line x1="0.5" y1="138.25" x2="3.8" y2="138.25" stroke="#a8a8a8" stroke-width="1"/>
<line x1="0.5" y1="141.64" x2="3.8" y2="141.64" stroke="#a8a8a8" stroke-width="1"/>
<line x1="0.5" y1="145.04" x2="3.8" y2="145.04" stroke="#a8a8a8" stroke-width="1"/>
<line x1="0.5" y1="148.43" x2="3.8" y2="148.43" stroke="#a8a8a8" stroke-width="1"/>
<line x1="0.5" y1="151.82" x2="3.8" y2="151.82" stroke="#a8a8a8" stroke-width="1"/>
<line x1="0.5" y1="155.22" x2="3.8" y2="155.22" stroke="#a8a8a8" stroke-width="1"/>
<line x1="0.5" y1="158.61" x2="3.8" y2="158.61" stroke="#a8a8a8" stroke-width="1"/>
<line x1="0.5" y1="162.01" x2="3.8" y2="162.01" stroke="#a8a8a8" stroke-width="1"/>
<line x1="0.5" y1="165.4" x2="5.5" y2="165.4" stroke="#b4b4b4" stroke-width="1"/>
<text x="0" y="0" transform="translate(6.1,165.4) rotate(90)" text-anchor="middle">5</text>
<line x1="0.5" y1="168.79" x2="3.8" y2="168.79" stroke="#a8a8a8" stroke-width="1"/>
<line x1="0.5" y1="172.19" x2="3.8" y2="172.19" stroke="#a8a8a8" stroke-width="1"/>
<line x1="0.5" y1="175.58" x2="3.8" y2="175.58" stroke="#a8a8a8" stroke-width="1"/>
<line x1="0.5" y1="178.98" x2="3.8" y2="178.98" stroke="#a8a8a8" stroke-width="1"/>
<line x1="0.5" y1="182.37" x2="3.8" y2="182.37" stroke="#a8a8a8" stroke-width="1"/>
<line x1="0.5" y1="185.76" x2="3.8" y2="185.76" stroke="#a8a8a8" stroke-width="1"/>
<line x1="0.5" y1="189.16" x2="3.8" y2="189.16" stroke="#a8a8a8" stroke-width="1"/>
<line x1="0.5" y1="192.55" x2="3.8" y2="192.55" stroke="#a8a8a8" stroke-width="1"/>
<line x1="0.5" y1="195.95" x2="3.8" y2="195.95" stroke="#a8a8a8" stroke-width="1"/>
<line x1="0.5" y1="199.34" x2="5.5" y2="199.34" stroke="#b4b4b4" stroke-width="1"/>
<text x="0" y="0" transform="translate(6.1,199.34) rotate(90)" text-anchor="middle">6</text>
<line x1="0.5" y1="202.73" x2="3.8" y2="202.73" stroke="#a8a8a8" stroke-width="1"/>
<line x1="0.5" y1="206.13" x2="3.8" y2="206.13" stroke="#a8a8a8" stroke-width="1"/>
<line x1="0.5" y1="209.52" x2="3.8" y2="209.52" stroke="#a8a8a8" stroke-width="1"/>
<line x1="0.5" y1="212.92" x2="3.8" y2="212.92" stroke="#a8a8a8" stroke-width="1"/>
<line x1="0.5" y1="216.31" x2="3.8" y2="216.31" stroke="#a8a8a8" stroke-width="1"/>
<line x1="0.5" y1="219.7" x2="3.8" y2="219.7" stroke="#a8a8a8" stroke-width="1"/>
<line x1="0.5" y1="223.1" x2="3.8" y2="223.1" stroke="#a8a8a8" stroke-width="1"/>
<line x1="0.5" y1="226.49" x2="3.8" y2="226.49" stroke="#a8a8a8" stroke-width="1"/>
<line x1="0.5" y1="229.89" x2="3.8" y2="229.89" stroke="#a8a8a8" stroke-width="1"/>
<line x1="0.5" y1="233.28" x2="5.5" y2="233.28" stroke="#b4b4b4" stroke-width="1"/>
<text x="0" y="0" transform="translate(6.1,233.28) rotate(90)" text-anchor="middle">7</text>
<line x1="0.5" y1="236.67" x2="3.8" y2="236.67" stroke="#a8a8a8" stroke-width="1"/>
<line x1="0.5" y1="240.07" x2="3.8" y2="240.07" stroke="#a8a8a8" stroke-width="1"/>
<line x1="0.5" y1="243.46" x2="3.8" y2="243.46" stroke="#a8a8a8" stroke-width="1"/>
<line x1="0.5" y1="246.86" x2="3.8" y2="246.86" stroke="#a8a8a8" stroke-width="1"/>
<line x1="0.5" y1="250.25" x2="3.8" y2="250.25" stroke="#a8a8a8" stroke-width="1"/>
<line x1="0.5" y1="253.64" x2="3.8" y2="253.64" stroke="#a8a8a8" stroke-width="1"/>
<line x1="0.5" y1="257.04" x2="3.8" y2="257.04" stroke="#a8a8a8" stroke-width="1"/>
<line x1="0.5" y1="260.43" x2="3.8" y2="260.43" stroke="#a8a8a8" stroke-width="1"/>
<line x1="0.5" y1="263.83" x2="3.8" y2="263.83" stroke="#a8a8a8" stroke-width="1"/>
<line x1="0.5" y1="267.22" x2="5.5" y2="267.22" stroke="#b4b4b4" stroke-width="1"/>
<text x="0" y="0" transform="translate(6.1,267.22) rotate(90)" text-anchor="middle">8</text>
<line x1="0.5" y1="270.61" x2="3.8" y2="270.61" stroke="#a8a8a8" stroke-width="1"/>
<line x1="0.5" y1="274.01" x2="3.8" y2="274.01" stroke="#a8a8a8" stroke-width="1"/>
<line x1="0.5" y1="277.4" x2="3.8" y2="277.4" stroke="#a8a8a8" stroke-width="1"/>
<line x1="0.5" y1="280.8" x2="3.8" y2="280.8" stroke="#a8a8a8" stroke-width="1"/>
<line x1="0.5" y1="284.19" x2="3.8" y2="284.19" stroke="#a8a8a8" stroke-width="1"/>
<line x1="0.5" y1="287.58" x2="3.8" y2="287.58" stroke="#a8a8a8" stroke-width="1"/>
<line x1="0.5" y1="290.98" x2="3.8" y2="290.98" stroke="#a8a8a8" stroke-width="1"/>
<line x1="0.5" y1="294.37" x2="3.8" y2="294.37" stroke="#a8a8a8" stroke-width="1"/>
<line x1="0.5" y1="297.77" x2="3.8" y2="297.77" stroke="#a8a8a8" stroke-width="1"/>
<line x1="0.5" y1="301.16" x2="5.5" y2="301.16" stroke="#b4b4b4" stroke-width="1"/>
<text x="0" y="0" transform="translate(6.1,301.16) rotate(90)" text-anchor="middle">9</text>
<line x1="0.5" y1="304.55" x2="3.8" y2="304.55" stroke="#a8a8a8" stroke-width="1"/>
<line x1="0.5" y1="307.95" x2="3.8" y2="307.95" stroke="#a8a8a8" stroke-width="1"/>
<line x1="0.5" y1="311.34" x2="3.8" y2="311.34" stroke="#a8a8a8" stroke-width="1"/>
<line x1="0.5" y1="314.74" x2="3.8" y2="314.74" stroke="#a8a8a8" stroke-width="1"/>
<line x1="0.5" y1="318.13" x2="3.8" y2="318.13" stroke="#a8a8a8" stroke-width="1"/>
<line x1="0.5" y1="321.52" x2="3.8" y2="321.52" stroke="#a8a8a8" stroke-width="1"/>
<line x1="0.5" y1="324.92" x2="3.8" y2="324.92" stroke="#a8a8a8" stroke-width="1"/>
<line x1="0.5" y1="328.31" x2="3.8" y2="328.31" stroke="#a8a8a8" stroke-width="1"/>
<line x1="0.5" y1="331.71" x2="3.8" y2="331.71" stroke="#a8a8a8" stroke-width="1"/>
<line x1="0.5" y1="335.1" x2="5.5" y2="335.1" stroke="#b4b4b4" stroke-width="1"/>
<text x="0" y="0" transform="translate(6.1,335.1) rotate(90)" text-anchor="middle">10</text>
<line x1="0.5" y1="338.49" x2="3.8" y2="338.49" stroke="#a8a8a8" stroke-width="1"/>
<line x1="0.5" y1="341.89" x2="3.8" y2="341.89" stroke="#a8a8a8" stroke-width="1"/>
<line x1="0.5" y1="345.28" x2="3.8" y2="345.28" stroke="#a8a8a8" stroke-width="1"/>
<line x1="0.5" y1="348.68" x2="3.8" y2="348.68" stroke="#a8a8a8" stroke-width="1"/>
<line x1="0.5" y1="352.07" x2="3.8" y2="352.07" stroke="#a8a8a8" stroke-width="1"/>
<line x1="0.5" y1="355.46" x2="3.8" y2="355.46" stroke="#a8a8a8" stroke-width="1"/>
<line x1="0.5" y1="358.86" x2="3.8" y2="358.86" stroke="#a8a8a8" stroke-width="1"/>
<line x1="0.5" y1="362.25" x2="3.8" y2="362.25" stroke="#a8a8a8" stroke-width="1"/>
<line x1="0.5" y1="365.65" x2="3.8" y2="365.65" stroke="#a8a8a8" stroke-width="1"/>
<line x1="0.5" y1="369.04" x2="5.5" y2="369.04" stroke="#b4b4b4" stroke-width="1"/>
<text x="0" y="0" transform="translate(6.1,369.04) rotate(90)" text-anchor="middle">11</text>
<line x1="0.5" y1="372.43" x2="3.8" y2="372.43" stroke="#a8a8a8" stroke-width="1"/>
<line x1="0.5" y1="375.83" x2="3.8" y2="375.83" stroke="#a8a8a8" stroke-width="1"/>
<line x1="0.5" y1="379.22" x2="3.8" y2="379.22" stroke="#a8a8a8" stroke-width="1"/>
<line x1="0.5" y1="382.62" x2="3.8" y2="382.62" stroke="#a8a8a8" stroke-width="1"/>
<line x1="0.5" y1="386.01" x2="3.8" y2="386.01" stroke="#a8a8a8" stroke-width="1"/>
<line x1="0.5" y1="389.4" x2="3.8" y2="389.4" stroke="#a8a8a8" stroke-width="1"/>
<line x1="0.5" y1="392.8" x2="3.8" y2="392.8" stroke="#a8a8a8" stroke-width="1"/>
<line x1="0.5" y1="396.19" x2="3.8" y2="396.19" stroke="#a8a8a8" stroke-width="1"/>
<line x1="0.5" y1="399.59" x2="3.8" y2="399.59" stroke="#a8a8a8" stroke-width="1"/>
<line x1="0.5" y1="402.98" x2="5.5" y2="402.98" stroke="#b4b4b4" stroke-width="1"/>
<text x="0" y="0" transform="translate(6.1,402.98) rotate(90)" text-anchor="middle">12</text>
<line x1="0.5" y1="406.37" x2="3.8" y2="406.37" stroke="#a8a8a8" stroke-width="1"/>
</svg>
<!-- paper -->
<div class="a" style="left:146px;top:54px;width:679px;height:402.5px;background:#e7e9e9;overflow:hidden">
<svg style="left:0;top:0" width="679" height="403">
<line x1="7.19" y1="0" x2="7.19" y2="403" stroke="#cccece" stroke-width="1"/>
<line x1="13.98" y1="0" x2="13.98" y2="403" stroke="#cccece" stroke-width="1"/>
<line x1="20.76" y1="0" x2="20.76" y2="403" stroke="#cccece" stroke-width="1"/>
<line x1="27.55" y1="0" x2="27.55" y2="403" stroke="#cccece" stroke-width="1"/>
<line x1="34.34" y1="0" x2="34.34" y2="403" stroke="#c6c8c8" stroke-width="1"/>
<line x1="41.13" y1="0" x2="41.13" y2="403" stroke="#cccece" stroke-width="1"/>
<line x1="47.92" y1="0" x2="47.92" y2="403" stroke="#cccece" stroke-width="1"/>
<line x1="54.7" y1="0" x2="54.7" y2="403" stroke="#cccece" stroke-width="1"/>
<line x1="61.49" y1="0" x2="61.49" y2="403" stroke="#cccece" stroke-width="1"/>
<line x1="68.28" y1="0" x2="68.28" y2="403" stroke="#c6c8c8" stroke-width="1"/>
<line x1="75.07" y1="0" x2="75.07" y2="403" stroke="#cccece" stroke-width="1"/>
<line x1="81.86" y1="0" x2="81.86" y2="403" stroke="#cccece" stroke-width="1"/>
<line x1="88.64" y1="0" x2="88.64" y2="403" stroke="#cccece" stroke-width="1"/>
<line x1="95.43" y1="0" x2="95.43" y2="403" stroke="#cccece" stroke-width="1"/>
<line x1="102.22" y1="0" x2="102.22" y2="403" stroke="#c6c8c8" stroke-width="1"/>
<line x1="109.01" y1="0" x2="109.01" y2="403" stroke="#cccece" stroke-width="1"/>
<line x1="115.8" y1="0" x2="115.8" y2="403" stroke="#cccece" stroke-width="1"/>
<line x1="122.58" y1="0" x2="122.58" y2="403" stroke="#cccece" stroke-width="1"/>
<line x1="129.37" y1="0" x2="129.37" y2="403" stroke="#cccece" stroke-width="1"/>
<line x1="136.16" y1="0" x2="136.16" y2="403" stroke="#c6c8c8" stroke-width="1"/>
<line x1="142.95" y1="0" x2="142.95" y2="403" stroke="#cccece" stroke-width="1"/>
<line x1="149.74" y1="0" x2="149.74" y2="403" stroke="#cccece" stroke-width="1"/>
<line x1="156.52" y1="0" x2="156.52" y2="403" stroke="#cccece" stroke-width="1"/>
<line x1="163.31" y1="0" x2="163.31" y2="403" stroke="#cccece" stroke-width="1"/>
<line x1="170.1" y1="0" x2="170.1" y2="403" stroke="#c6c8c8" stroke-width="1"/>
<line x1="176.89" y1="0" x2="176.89" y2="403" stroke="#cccece" stroke-width="1"/>
<line x1="183.68" y1="0" x2="183.68" y2="403" stroke="#cccece" stroke-width="1"/>
<line x1="190.46" y1="0" x2="190.46" y2="403" stroke="#cccece" stroke-width="1"/>
<line x1="197.25" y1="0" x2="197.25" y2="403" stroke="#cccece" stroke-width="1"/>
<line x1="204.04" y1="0" x2="204.04" y2="403" stroke="#c6c8c8" stroke-width="1"/>
<line x1="210.83" y1="0" x2="210.83" y2="403" stroke="#cccece" stroke-width="1"/>
<line x1="217.62" y1="0" x2="217.62" y2="403" stroke="#cccece" stroke-width="1"/>
<line x1="224.4" y1="0" x2="224.4" y2="403" stroke="#cccece" stroke-width="1"/>
<line x1="231.19" y1="0" x2="231.19" y2="403" stroke="#cccece" stroke-width="1"/>
<line x1="237.98" y1="0" x2="237.98" y2="403" stroke="#c6c8c8" stroke-width="1"/>
<line x1="244.77" y1="0" x2="244.77" y2="403" stroke="#cccece" stroke-width="1"/>
<line x1="251.56" y1="0" x2="251.56" y2="403" stroke="#cccece" stroke-width="1"/>
<line x1="258.34" y1="0" x2="258.34" y2="403" stroke="#cccece" stroke-width="1"/>
<line x1="265.13" y1="0" x2="265.13" y2="403" stroke="#cccece" stroke-width="1"/>
<line x1="271.92" y1="0" x2="271.92" y2="403" stroke="#c6c8c8" stroke-width="1"/>
<line x1="278.71" y1="0" x2="278.71" y2="403" stroke="#cccece" stroke-width="1"/>
<line x1="285.5" y1="0" x2="285.5" y2="403" stroke="#cccece" stroke-width="1"/>
<line x1="292.28" y1="0" x2="292.28" y2="403" stroke="#cccece" stroke-width="1"/>
<line x1="299.07" y1="0" x2="299.07" y2="403" stroke="#cccece" stroke-width="1"/>
<line x1="305.86" y1="0" x2="305.86" y2="403" stroke="#c6c8c8" stroke-width="1"/>
<line x1="312.65" y1="0" x2="312.65" y2="403" stroke="#cccece" stroke-width="1"/>
<line x1="319.44" y1="0" x2="319.44" y2="403" stroke="#cccece" stroke-width="1"/>
<line x1="326.22" y1="0" x2="326.22" y2="403" stroke="#cccece" stroke-width="1"/>
<line x1="333.01" y1="0" x2="333.01" y2="403" stroke="#cccece" stroke-width="1"/>
<line x1="339.8" y1="0" x2="339.8" y2="403" stroke="#c6c8c8" stroke-width="1"/>
<line x1="346.59" y1="0" x2="346.59" y2="403" stroke="#cccece" stroke-width="1"/>
<line x1="353.38" y1="0" x2="353.38" y2="403" stroke="#cccece" stroke-width="1"/>
<line x1="360.16" y1="0" x2="360.16" y2="403" stroke="#cccece" stroke-width="1"/>
<line x1="366.95" y1="0" x2="366.95" y2="403" stroke="#cccece" stroke-width="1"/>
<line x1="373.74" y1="0" x2="373.74" y2="403" stroke="#c6c8c8" stroke-width="1"/>
<line x1="380.53" y1="0" x2="380.53" y2="403" stroke="#cccece" stroke-width="1"/>
<line x1="387.32" y1="0" x2="387.32" y2="403" stroke="#cccece" stroke-width="1"/>
<line x1="394.1" y1="0" x2="394.1" y2="403" stroke="#cccece" stroke-width="1"/>
<line x1="400.89" y1="0" x2="400.89" y2="403" stroke="#cccece" stroke-width="1"/>
<line x1="407.68" y1="0" x2="407.68" y2="403" stroke="#c6c8c8" stroke-width="1"/>
<line x1="414.47" y1="0" x2="414.47" y2="403" stroke="#cccece" stroke-width="1"/>
<line x1="421.26" y1="0" x2="421.26" y2="403" stroke="#cccece" stroke-width="1"/>
<line x1="428.04" y1="0" x2="428.04" y2="403" stroke="#cccece" stroke-width="1"/>
<line x1="434.83" y1="0" x2="434.83" y2="403" stroke="#cccece" stroke-width="1"/>
<line x1="441.62" y1="0" x2="441.62" y2="403" stroke="#c6c8c8" stroke-width="1"/>
<line x1="448.41" y1="0" x2="448.41" y2="403" stroke="#cccece" stroke-width="1"/>
<line x1="455.2" y1="0" x2="455.2" y2="403" stroke="#cccece" stroke-width="1"/>
<line x1="461.98" y1="0" x2="461.98" y2="403" stroke="#cccece" stroke-width="1"/>
<line x1="468.77" y1="0" x2="468.77" y2="403" stroke="#cccece" stroke-width="1"/>
<line x1="475.56" y1="0" x2="475.56" y2="403" stroke="#c6c8c8" stroke-width="1"/>
<line x1="482.35" y1="0" x2="482.35" y2="403" stroke="#cccece" stroke-width="1"/>
<line x1="489.14" y1="0" x2="489.14" y2="403" stroke="#cccece" stroke-width="1"/>
<line x1="495.92" y1="0" x2="495.92" y2="403" stroke="#cccece" stroke-width="1"/>
<line x1="502.71" y1="0" x2="502.71" y2="403" stroke="#cccece" stroke-width="1"/>
<line x1="509.5" y1="0" x2="509.5" y2="403" stroke="#c6c8c8" stroke-width="1"/>
<line x1="516.29" y1="0" x2="516.29" y2="403" stroke="#cccece" stroke-width="1"/>
<line x1="523.08" y1="0" x2="523.08" y2="403" stroke="#cccece" stroke-width="1"/>
<line x1="529.86" y1="0" x2="529.86" y2="403" stroke="#cccece" stroke-width="1"/>
<line x1="536.65" y1="0" x2="536.65" y2="403" stroke="#cccece" stroke-width="1"/>
<line x1="543.44" y1="0" x2="543.44" y2="403" stroke="#c6c8c8" stroke-width="1"/>
<line x1="550.23" y1="0" x2="550.23" y2="403" stroke="#cccece" stroke-width="1"/>
<line x1="557.02" y1="0" x2="557.02" y2="403" stroke="#cccece" stroke-width="1"/>
<line x1="563.8" y1="0" x2="563.8" y2="403" stroke="#cccece" stroke-width="1"/>
<line x1="570.59" y1="0" x2="570.59" y2="403" stroke="#cccece" stroke-width="1"/>
<line x1="577.38" y1="0" x2="577.38" y2="403" stroke="#c6c8c8" stroke-width="1"/>
<line x1="584.17" y1="0" x2="584.17" y2="403" stroke="#cccece" stroke-width="1"/>
<line x1="590.96" y1="0" x2="590.96" y2="403" stroke="#cccece" stroke-width="1"/>
<line x1="597.74" y1="0" x2="597.74" y2="403" stroke="#cccece" stroke-width="1"/>
<line x1="604.53" y1="0" x2="604.53" y2="403" stroke="#cccece" stroke-width="1"/>
<line x1="611.32" y1="0" x2="611.32" y2="403" stroke="#c6c8c8" stroke-width="1"/>
<line x1="618.11" y1="0" x2="618.11" y2="403" stroke="#cccece" stroke-width="1"/>
<line x1="624.9" y1="0" x2="624.9" y2="403" stroke="#cccece" stroke-width="1"/>
<line x1="631.68" y1="0" x2="631.68" y2="403" stroke="#cccece" stroke-width="1"/>
<line x1="638.47" y1="0" x2="638.47" y2="403" stroke="#cccece" stroke-width="1"/>
<line x1="645.26" y1="0" x2="645.26" y2="403" stroke="#c6c8c8" stroke-width="1"/>
<line x1="652.05" y1="0" x2="652.05" y2="403" stroke="#cccece" stroke-width="1"/>
<line x1="658.84" y1="0" x2="658.84" y2="403" stroke="#cccece" stroke-width="1"/>
<line x1="665.62" y1="0" x2="665.62" y2="403" stroke="#cccece" stroke-width="1"/>
<line x1="672.41" y1="0" x2="672.41" y2="403" stroke="#cccece" stroke-width="1"/>
<line x1="0" y1="2.49" x2="679" y2="2.49" stroke="#cccece" stroke-width="1"/>
<line x1="0" y1="9.28" x2="679" y2="9.28" stroke="#cccece" stroke-width="1"/>
<line x1="0" y1="16.06" x2="679" y2="16.06" stroke="#cccece" stroke-width="1"/>
<line x1="0" y1="22.85" x2="679" y2="22.85" stroke="#cccece" stroke-width="1"/>
<line x1="0" y1="29.64" x2="679" y2="29.64" stroke="#c6c8c8" stroke-width="1"/>
<line x1="0" y1="36.43" x2="679" y2="36.43" stroke="#cccece" stroke-width="1"/>
<line x1="0" y1="43.22" x2="679" y2="43.22" stroke="#cccece" stroke-width="1"/>
<line x1="0" y1="50" x2="679" y2="50" stroke="#cccece" stroke-width="1"/>
<line x1="0" y1="56.79" x2="679" y2="56.79" stroke="#cccece" stroke-width="1"/>
<line x1="0" y1="63.58" x2="679" y2="63.58" stroke="#c6c8c8" stroke-width="1"/>
<line x1="0" y1="70.37" x2="679" y2="70.37" stroke="#cccece" stroke-width="1"/>
<line x1="0" y1="77.16" x2="679" y2="77.16" stroke="#cccece" stroke-width="1"/>
<line x1="0" y1="83.94" x2="679" y2="83.94" stroke="#cccece" stroke-width="1"/>
<line x1="0" y1="90.73" x2="679" y2="90.73" stroke="#cccece" stroke-width="1"/>
<line x1="0" y1="97.52" x2="679" y2="97.52" stroke="#c6c8c8" stroke-width="1"/>
<line x1="0" y1="104.31" x2="679" y2="104.31" stroke="#cccece" stroke-width="1"/>
<line x1="0" y1="111.1" x2="679" y2="111.1" stroke="#cccece" stroke-width="1"/>
<line x1="0" y1="117.88" x2="679" y2="117.88" stroke="#cccece" stroke-width="1"/>
<line x1="0" y1="124.67" x2="679" y2="124.67" stroke="#cccece" stroke-width="1"/>
<line x1="0" y1="131.46" x2="679" y2="131.46" stroke="#c6c8c8" stroke-width="1"/>
<line x1="0" y1="138.25" x2="679" y2="138.25" stroke="#cccece" stroke-width="1"/>
<line x1="0" y1="145.04" x2="679" y2="145.04" stroke="#cccece" stroke-width="1"/>
<line x1="0" y1="151.82" x2="679" y2="151.82" stroke="#cccece" stroke-width="1"/>
<line x1="0" y1="158.61" x2="679" y2="158.61" stroke="#cccece" stroke-width="1"/>
<line x1="0" y1="165.4" x2="679" y2="165.4" stroke="#c6c8c8" stroke-width="1"/>
<line x1="0" y1="172.19" x2="679" y2="172.19" stroke="#cccece" stroke-width="1"/>
<line x1="0" y1="178.98" x2="679" y2="178.98" stroke="#cccece" stroke-width="1"/>
<line x1="0" y1="185.76" x2="679" y2="185.76" stroke="#cccece" stroke-width="1"/>
<line x1="0" y1="192.55" x2="679" y2="192.55" stroke="#cccece" stroke-width="1"/>
<line x1="0" y1="199.34" x2="679" y2="199.34" stroke="#c6c8c8" stroke-width="1"/>
<line x1="0" y1="206.13" x2="679" y2="206.13" stroke="#cccece" stroke-width="1"/>
<line x1="0" y1="212.92" x2="679" y2="212.92" stroke="#cccece" stroke-width="1"/>
<line x1="0" y1="219.7" x2="679" y2="219.7" stroke="#cccece" stroke-width="1"/>
<line x1="0" y1="226.49" x2="679" y2="226.49" stroke="#cccece" stroke-width="1"/>
<line x1="0" y1="233.28" x2="679" y2="233.28" stroke="#c6c8c8" stroke-width="1"/>
<line x1="0" y1="240.07" x2="679" y2="240.07" stroke="#cccece" stroke-width="1"/>
<line x1="0" y1="246.86" x2="679" y2="246.86" stroke="#cccece" stroke-width="1"/>
<line x1="0" y1="253.64" x2="679" y2="253.64" stroke="#cccece" stroke-width="1"/>
<line x1="0" y1="260.43" x2="679" y2="260.43" stroke="#cccece" stroke-width="1"/>
<line x1="0" y1="267.22" x2="679" y2="267.22" stroke="#c6c8c8" stroke-width="1"/>
<line x1="0" y1="274.01" x2="679" y2="274.01" stroke="#cccece" stroke-width="1"/>
<line x1="0" y1="280.8" x2="679" y2="280.8" stroke="#cccece" stroke-width="1"/>
<line x1="0" y1="287.58" x2="679" y2="287.58" stroke="#cccece" stroke-width="1"/>
<line x1="0" y1="294.37" x2="679" y2="294.37" stroke="#cccece" stroke-width="1"/>
<line x1="0" y1="301.16" x2="679" y2="301.16" stroke="#c6c8c8" stroke-width="1"/>
<line x1="0" y1="307.95" x2="679" y2="307.95" stroke="#cccece" stroke-width="1"/>
<line x1="0" y1="314.74" x2="679" y2="314.74" stroke="#cccece" stroke-width="1"/>
<line x1="0" y1="321.52" x2="679" y2="321.52" stroke="#cccece" stroke-width="1"/>
<line x1="0" y1="328.31" x2="679" y2="328.31" stroke="#cccece" stroke-width="1"/>
<line x1="0" y1="335.1" x2="679" y2="335.1" stroke="#c6c8c8" stroke-width="1"/>
<line x1="0" y1="341.89" x2="679" y2="341.89" stroke="#cccece" stroke-width="1"/>
<line x1="0" y1="348.68" x2="679" y2="348.68" stroke="#cccece" stroke-width="1"/>
<line x1="0" y1="355.46" x2="679" y2="355.46" stroke="#cccece" stroke-width="1"/>
<line x1="0" y1="362.25" x2="679" y2="362.25" stroke="#cccece" stroke-width="1"/>
<line x1="0" y1="369.04" x2="679" y2="369.04" stroke="#c6c8c8" stroke-width="1"/>
<line x1="0" y1="375.83" x2="679" y2="375.83" stroke="#cccece" stroke-width="1"/>
<line x1="0" y1="382.62" x2="679" y2="382.62" stroke="#cccece" stroke-width="1"/>
<line x1="0" y1="389.4" x2="679" y2="389.4" stroke="#cccece" stroke-width="1"/>
<line x1="0" y1="396.19" x2="679" y2="396.19" stroke="#cccece" stroke-width="1"/>
</svg>
<svg style="left:0;top:0" width="679" height="403">
 <path transform="translate(-146,-54)" fill="none" stroke="#666666" stroke-width="1.25"
  d="M222.1 395.5 L222.1 205 C222.1 179.9 251.8 167.6 262.3 165.1 C295.7 157.5 319.5 139.5 319.5 120.5 C319.5 105.3 307.8 83.1 289.7 83.1 C270.8 83.1 259.5 92.3 259.5 101.1 C259.5 114.3 248.9 122.8 241.1 122.8 C229.8 122.8 221.6 113.2 221.6 102.6 C221.6 81.6 249.9 56.8 292.1 56.8 C325.7 56.8 358.2 86.9 358.2 127.9 L358.2 395.5 C358.2 410.1 350.9 416.9 335.3 416.9 C319.7 416.9 312.4 410.1 312.4 395.5 L312.4 371 A41.3 41.3 0 0 1 266.9 371 L266.9 395.5 C266.9 410.1 259.7 416.9 244.5 416.9 C229.3 416.9 222.1 410.1 222.1 395.5 Z"/>
</svg>
</div>

<!-- RIGHT PANEL -->
<div class="a" style="left:875px;top:44px;width:149px;height:418px;background:#2d2f2f"></div>
<div class="a" style="left:875px;top:44px;width:1px;height:418px;background:#27292a;z-index:1"></div>
<div class="a" style="left:875px;top:44px;width:149px;height:15px;background:#242424"></div>
<div class="a" style="left:875px;top:59px;width:149px;height:1px;background:#3a3c3c"></div>
<svg style="left:1010px;top:48px" width="8" height="10"><path d="M1 1 L5.6 4.5 L1 8 Z" fill="#e8e8e8"/></svg>
<div class="a" style="left:875px;top:60px;width:149px;height:17px;background:#242424"></div>

<div class="inp" style="left:915px;top:89px;width:75px;height:11.5px"></div>
<div class="inp" style="left:915px;top:110px;width:75px;height:11.5px"></div>
<div class="inp" style="left:915px;top:131px;width:75px;height:12px"></div>
<div class="inp" style="left:915px;top:152.5px;width:73px;height:12px"></div>

<div class="a" style="left:875px;top:169px;width:149px;height:1px;background:#3a3c3c"></div>
<div class="a" style="left:875px;top:170px;width:149px;height:16.5px;background:#242424"></div>
<div class="inp" style="left:915px;top:198px;width:105px;height:11.5px"></div>
<div class="a" style="left:875px;top:213px;width:149px;height:1px;background:#333535"></div>
<svg style="left:875px;top:214px" width="149" height="60">
 <circle cx="43" cy="15.6" r="3" fill="#c8c8c8"/>
 <circle cx="78.4" cy="15.6" r="3" fill="#e8e8e8"/>
 <circle cx="78.4" cy="15.6" r="1.8" fill="#1a7bd0"/>
 <circle cx="113.8" cy="12" r="3" fill="#c8c8c8"/>
</svg>
<div class="inp" style="left:911px;top:245px;width:34px;height:11.5px"></div>
<div class="inp" style="left:947.5px;top:245px;width:37px;height:11.5px"></div>

<div class="a" style="left:875px;top:271px;width:149px;height:1px;background:#3a3c3c"></div>
<div class="a" style="left:875px;top:272px;width:149px;height:15px;background:#242424"></div>
<svg style="left:960px;top:272px" width="64" height="15">
 <path d="M6.3 5 h5.5 l-2.75 3.6 z" fill="#e8e8e8"/>
 <rect x="50" y="5.3" width="11.2" height="4.4" rx="2.2" fill="#3a3b3b"/>
 <circle cx="51.7" cy="7.5" r="3" fill="#eeeeee"/>
</svg>
<svg style="left:875px;top:296px" width="10" height="24">
 <circle cx="4" cy="8.8" r="0.95" fill="#1d7fc4"/><circle cx="4" cy="12.9" r="0.95" fill="#1d7fc4"/><circle cx="4" cy="16.9" r="0.95" fill="#1d7fc4"/>
</svg>
<div class="a" style="left:884.3px;top:302.5px;width:19.7px;height:12px;background:#1f2121"></div>
<div class="inp" style="left:909.6px;top:302.5px;width:26px;height:12px"></div>
<div class="inp" style="left:941px;top:302.5px;width:26px;height:12px"></div>
<div class="inp" style="left:972.3px;top:302.5px;width:26px;height:12px"></div>
<div class="inp" style="left:1004px;top:302.5px;width:20px;height:12px"></div>
<svg style="left:0;top:0;z-index:10" width="1024" height="475">
<rect x="2.7" y="183.7" width="4.4" height="2.6" fill="#e8262d"/>
<rect x="2.7" y="210.1" width="4.4" height="2.6" fill="#e8262d"/>
<rect x="14.2" y="183.7" width="6.6" height="2.6" fill="#e8262d"/>
<rect x="14.2" y="210.1" width="6.6" height="2.6" fill="#e8262d"/>
<rect x="27.9" y="183.7" width="6.6" height="2.6" fill="#e8262d"/>
<rect x="27.9" y="210.1" width="6.6" height="2.6" fill="#e8262d"/>
<rect x="41.6" y="183.7" width="6.6" height="2.6" fill="#e8262d"/>
<rect x="41.6" y="210.1" width="6.6" height="2.6" fill="#e8262d"/>
<rect x="55.3" y="183.7" width="6.7" height="2.6" fill="#e8262d"/>
<rect x="55.3" y="210.1" width="6.7" height="2.6" fill="#e8262d"/>
<rect x="69" y="183.7" width="6.5" height="2.6" fill="#e8262d"/>
<rect x="69" y="210.1" width="6.5" height="2.6" fill="#e8262d"/>
<rect x="82.6" y="183.7" width="6.3" height="2.6" fill="#e8262d"/>
<rect x="82.6" y="210.1" width="6.3" height="2.6" fill="#e8262d"/>
<rect x="95.6" y="183.7" width="5" height="2.6" fill="#e8262d"/>
<rect x="95.6" y="210.1" width="5" height="2.6" fill="#e8262d"/>
<rect x="2.7" y="183.7" width="2.6" height="4.3" fill="#e8262d"/>
<rect x="98" y="183.7" width="2.6" height="4.3" fill="#e8262d"/>
<rect x="2.7" y="194.6" width="2.6" height="7.1" fill="#e8262d"/>
<rect x="98" y="194.6" width="2.6" height="7.1" fill="#e8262d"/>
<rect x="2.7" y="207.9" width="2.6" height="4.8" fill="#e8262d"/>
<rect x="98" y="207.9" width="2.6" height="4.8" fill="#e8262d"/>
<rect x="869.8" y="287.9" width="4.4" height="2.3" fill="#e8262d"/>
<rect x="869.8" y="323.8" width="4.4" height="2.3" fill="#e8262d"/>
<rect x="880" y="287.9" width="6.3" height="2.3" fill="#e8262d"/>
<rect x="880" y="323.8" width="6.3" height="2.3" fill="#e8262d"/>
<rect x="892.45" y="287.9" width="6.3" height="2.3" fill="#e8262d"/>
<rect x="892.45" y="323.8" width="6.3" height="2.3" fill="#e8262d"/>
<rect x="904.9" y="287.9" width="6.3" height="2.3" fill="#e8262d"/>
<rect x="904.9" y="323.8" width="6.3" height="2.3" fill="#e8262d"/>
<rect x="917.35" y="287.9" width="6.3" height="2.3" fill="#e8262d"/>
<rect x="917.35" y="323.8" width="6.3" height="2.3" fill="#e8262d"/>
<rect x="929.8" y="287.9" width="6.3" height="2.3" fill="#e8262d"/>
<rect x="929.8" y="323.8" width="6.3" height="2.3" fill="#e8262d"/>
<rect x="942.25" y="287.9" width="6.3" height="2.3" fill="#e8262d"/>
<rect x="942.25" y="323.8" width="6.3" height="2.3" fill="#e8262d"/>
<rect x="954.7" y="287.9" width="6.3" height="2.3" fill="#e8262d"/>
<rect x="954.7" y="323.8" width="6.3" height="2.3" fill="#e8262d"/>
<rect x="967.15" y="287.9" width="6.3" height="2.3" fill="#e8262d"/>
<rect x="967.15" y="323.8" width="6.3" height="2.3" fill="#e8262d"/>
<rect x="979.6" y="287.9" width="6.3" height="2.3" fill="#e8262d"/>
<rect x="979.6" y="323.8" width="6.3" height="2.3" fill="#e8262d"/>
<rect x="992.05" y="287.9" width="6.3" height="2.3" fill="#e8262d"/>
<rect x="992.05" y="323.8" width="6.3" height="2.3" fill="#e8262d"/>
<rect x="1004.5" y="287.9" width="6.3" height="2.3" fill="#e8262d"/>
<rect x="1004.5" y="323.8" width="6.3" height="2.3" fill="#e8262d"/>
<rect x="1017.1" y="287.9" width="4.4" height="2.3" fill="#e8262d"/>
<rect x="1017.1" y="323.8" width="4.4" height="2.3" fill="#e8262d"/>
<rect x="869.8" y="287.9" width="2.3" height="4.6" fill="#e8262d"/>
<rect x="1019.2" y="287.9" width="2.3" height="4.6" fill="#e8262d"/>
<rect x="869.8" y="298" width="2.3" height="5.9" fill="#e8262d"/>
<rect x="1019.2" y="298" width="2.3" height="5.9" fill="#e8262d"/>
<rect x="869.8" y="309.7" width="2.3" height="6.3" fill="#e8262d"/>
<rect x="1019.2" y="309.7" width="2.3" height="6.3" fill="#e8262d"/>
<rect x="869.8" y="321.8" width="2.3" height="4.3" fill="#e8262d"/>
<rect x="1019.2" y="321.8" width="2.3" height="4.3" fill="#e8262d"/>
</svg>
<div class="a" style="left:877px;top:455.5px;width:139px;height:5px;background:#262828;border-radius:2.5px"></div>

<!-- STATUS BAR -->
<div class="a" style="left:0;top:462px;width:106px;height:13px;background:#222222"></div>
<div class="a" style="left:106px;top:463px;width:769px;height:12px;background:#222222"></div>
<div class="a" style="left:875px;top:462px;width:149px;height:13px;background:#222222"></div>
<div class="a" style="left:0;top:473.7px;width:1024px;height:1.3px;background:#2c3034"></div>
<svg style="left:860px;top:462px" width="60" height="13">
 <path d="M9 2.6 L6.4 6 L9 9.4 M15.3 2.6 L17.9 6 L15.3 9.4" fill="none" stroke="#56bf61" stroke-width="1.3"/>
 <path d="M9.6 6 h5" stroke="#56bf61" stroke-width="1.1" stroke-dasharray="1.1 0.7"/>
 <rect x="25.5" y="4.6" width="9.6" height="2.8" fill="none" stroke="#4db85a" stroke-width="1.1"/>
 <path d="M47.9 0.8 C47.9 0.8 44.5 5.2 44.5 7.6 a3.45 3.45 0 0 0 6.9 0 C51.4 5.2 47.9 0.8 47.9 0.8 Z" fill="#46b152"/>
</svg>
<div class="t" id="m1" style="left:10.00px;top:7.72px;font-size:6.6px;color:#d6d6d6;-webkit-text-stroke:0.25px;transform:scaleX(0.9091);">File</div>
<div class="t" id="m2" style="left:29.00px;top:7.72px;font-size:6.6px;color:#d6d6d6;-webkit-text-stroke:0.25px;transform:scaleX(0.9711);">Edit</div>
<div class="t" id="m3" style="left:49.00px;top:7.72px;font-size:6.6px;color:#d6d6d6;-webkit-text-stroke:0.25px;transform:scaleX(1.0500);">Modify</div>
<div class="t" id="m4" style="left:78.00px;top:7.72px;font-size:6.6px;color:#d6d6d6;-webkit-text-stroke:0.25px;">View</div>
<div class="t" id="m5" style="left:101.00px;top:7.72px;font-size:6.6px;color:#d6d6d6;-webkit-text-stroke:0.25px;transform:scaleX(0.9286);">Muse Hobby Laser</div>
<div class="t" id="zoom" style="left:305.99px;top:27.33px;font-size:6.6px;color:#d9578b;transform:scaleX(0.9892);">64%</div>
<div class="t" id="tab1" style="left:7.00px;top:50.16px;font-size:6.3px;color:#f4f4f4;font-weight:bold;-webkit-text-stroke:0.15px;transform:scaleX(0.9459);">WORKSPACES</div>
<div class="t" id="tab2" style="left:63.82px;top:49.96px;font-size:6.3px;color:#e4e4e4;font-weight:bold;-webkit-text-stroke:0.15px;transform:scaleX(0.8921);">CLIPART</div>
<div class="t" id="proj" style="left:3.00px;top:66.46px;font-size:6.7px;color:#d8d8d8;-webkit-text-stroke:0.25px;transform:scaleX(0.9583);">Projects</div>
<div class="t" id="np" style="left:17.00px;top:84.11px;font-size:6.3px;color:#f0f0f0;font-weight:bold;-webkit-text-stroke:0.15px;transform:scaleX(0.9323);">New Project</div>
<div class="t" id="lay" style="left:2.43px;top:161.11px;font-size:6.7px;color:#d8d8d8;-webkit-text-stroke:0.25px;transform:scaleX(0.9047);">Layers</div>
<div class="t" id="l1" style="left:19.42px;top:178.36px;font-size:6.3px;color:#e8e8e8;font-weight:bold;transform:scaleX(1.0500);">20191115-...</div>
<div class="t" id="l2" style="left:31.17px;top:195.71px;font-size:6.3px;color:#e8e8e8;font-weight:bold;transform:scaleX(1.0275);">20191115-3...</div>
<div class="t" id="l3" style="left:31.17px;top:214.36px;font-size:6.3px;color:#e8e8e8;font-weight:bold;transform:scaleX(1.0275);">20191115-3...</div>
<div class="t" id="in" style="left:97.60px;top:45.87px;font-size:6.6px;color:#dcdcdc;font-weight:bold;transform:scaleX(1.0500);">in</div>
<div class="t" id="jog" style="left:878.40px;top:50.12px;font-size:6.6px;color:#e2dccb;-webkit-text-stroke:0.25px;transform:scaleX(0.9469);">Jog Controls</div>
<div class="t" id="ap" style="left:878.00px;top:67.32px;font-size:6.6px;color:#eeeeee;-webkit-text-stroke:0.25px;transform:scaleX(0.9756);">Active Project</div>
<div class="t" id="name" style="left:879.20px;top:92.12px;font-size:6.6px;color:#dddddd;font-weight:bold;transform:scaleX(0.9031);">Name:</div>
<div class="t" id="npv" style="left:917.21px;top:92.12px;font-size:6.6px;color:#dcdcdc;-webkit-text-stroke:0.25px;transform:scaleX(0.9454);">New Project</div>
<div class="t" id="mod" style="left:879.17px;top:112.67px;font-size:6.6px;color:#dddddd;font-weight:bold;transform:scaleX(0.9161);">Modified:</div>
<div class="t" id="date" style="left:917.21px;top:113.12px;font-size:6.6px;color:#dcdcdc;-webkit-text-stroke:0.25px;transform:scaleX(0.9518);">2019-08-08 09:14:26 am</div>
<div class="t" id="jt1" style="left:879.00px;top:131.47px;font-size:6.6px;color:#dddddd;font-weight:bold;transform:scaleX(0.8400);">Job Time</div>
<div class="t" id="jt2" style="left:879.05px;top:137.87px;font-size:6.6px;color:#dddddd;font-weight:bold;transform:scaleX(0.8756);">Estimate:</div>
<div class="t" id="rs1" style="left:879.00px;top:149.72px;font-size:6.6px;color:#dddddd;font-weight:bold;transform:scaleX(0.8921);">Relative</div>
<div class="t" id="rs2" style="left:878.99px;top:156.07px;font-size:6.6px;color:#dddddd;font-weight:bold;transform:scaleX(0.9415);">Start</div>
<div class="t" id="rs3" style="left:879.00px;top:162.07px;font-size:6.6px;color:#dddddd;font-weight:bold;transform:scaleX(0.8533);">Position</div>
<div class="t" id="tl" style="left:920.46px;top:156.07px;font-size:6.6px;color:#7c7c7c;-webkit-text-stroke:0.25px;transform:scaleX(1.0030);">Top-Left</div>
<div class="t" id="doc" style="left:878.77px;top:176.10px;font-size:6.8px;color:#e4e4e4;font-weight:bold;transform:scaleX(0.8682);">Document</div>
<div class="t" id="unit" style="left:879.00px;top:201.07px;font-size:6.6px;color:#dddddd;font-weight:bold;transform:scaleX(0.8908);">Unit</div>
<div class="t" id="inch" style="left:920.25px;top:201.07px;font-size:6.6px;color:#dcdcdc;-webkit-text-stroke:0.25px;transform:scaleX(0.8765);">Inches</div>
<div class="t" id="grid" style="left:879.00px;top:227.12px;font-size:6.6px;color:#dddddd;font-weight:bold;transform:scaleX(0.9648);">Grid</div>
<div class="t" id="off" style="left:924.18px;top:227.12px;font-size:6.6px;color:#dddddd;font-weight:bold;transform:scaleX(0.9000);">Off</div>
<div class="t" id="on" style="left:959.49px;top:227.12px;font-size:6.6px;color:#dddddd;font-weight:bold;transform:scaleX(0.9035);">On</div>
<div class="t" id="iso" style="left:988.00px;top:231.12px;font-size:6.6px;color:#dddddd;font-weight:bold;transform:scaleX(0.8821);">Isometric</div>
<div class="t" id="g1" style="left:914.25px;top:248.67px;font-size:6.6px;color:#dcdcdc;-webkit-text-stroke:0.25px;transform:scaleX(0.9035);">0.1</div>
<div class="t" id="g2" style="left:949.83px;top:248.67px;font-size:6.6px;color:#dcdcdc;-webkit-text-stroke:0.25px;transform:scaleX(0.9035);">0.1</div>
<div class="t" id="wid" style="left:919.20px;top:258.32px;font-size:6.6px;color:#dddddd;-webkit-text-stroke:0.25px;transform:scaleX(1.0384);">Width</div>
<div class="t" id="hei" style="left:955.77px;top:258.32px;font-size:6.6px;color:#dddddd;-webkit-text-stroke:0.25px;transform:scaleX(1.0048);">Height</div>
<div class="t" id="vep" style="left:877.60px;top:276.07px;font-size:6.6px;color:#e8e8e8;-webkit-text-stroke:0.25px;transform:scaleX(0.9421);">Vector Engraving Parameters</div>
<div class="t" id="spd" style="left:913.42px;top:294.32px;font-size:6.6px;color:#dddddd;-webkit-text-stroke:0.25px;transform:scaleX(0.8701);">Speed</div>
<div class="t" id="pow" style="left:945.00px;top:294.32px;font-size:6.6px;color:#dddddd;-webkit-text-stroke:0.25px;transform:scaleX(0.9000);">Power</div>
<div class="t" id="cur" style="left:974.00px;top:294.32px;font-size:6.6px;color:#dddddd;-webkit-text-stroke:0.25px;transform:scaleX(0.9811);">Current</div>
<div class="t" id="pas" style="left:1007.35px;top:294.32px;font-size:6.6px;color:#dddddd;-webkit-text-stroke:0.25px;transform:scaleX(0.8400);width:16.25px;overflow:hidden;">Passes</div>
<div class="t" id="v1" style="left:913.42px;top:306.07px;font-size:6.6px;color:#dcdcdc;-webkit-text-stroke:0.25px;transform:scaleX(0.9670);">100</div>
<div class="t" id="v2" style="left:943.87px;top:306.07px;font-size:6.6px;color:#dcdcdc;-webkit-text-stroke:0.25px;transform:scaleX(0.9670);">100</div>
<div class="t" id="v3" style="left:975.05px;top:306.07px;font-size:6.6px;color:#dcdcdc;-webkit-text-stroke:0.25px;transform:scaleX(0.9240);">100</div>
<div class="t" id="v4" style="left:1007.00px;top:306.07px;font-size:6.6px;color:#dcdcdc;-webkit-text-stroke:0.25px;transform:scaleX(0.8400);">1</div>
<div class="t" id="pos" style="left:3.00px;top:465.29px;font-size:6.5px;color:#8a8a8a;-webkit-text-stroke:0.25px;">Position:</div>
<div class="t" id="xy" style="left:32.00px;top:465.29px;font-size:6.5px;color:#eeeeee;font-weight:bold;-webkit-text-stroke:0.15px;transform:scaleX(1.0172);">X: 0.000", Y: 0.100"</div>
<div class="t" id="st" style="left:456.81px;top:465.29px;font-size:6.5px;color:#8a8a8a;-webkit-text-stroke:0.25px;transform:scaleX(0.9764);">Status:</div>
<div class="t" id="rdy" style="left:481.00px;top:465.29px;font-size:6.5px;color:#eeeeee;font-weight:bold;-webkit-text-stroke:0.15px;transform:scaleX(0.9000);">Ready</div>
<div class="t" id="syn" style="left:778.00px;top:465.29px;font-size:6.5px;color:#8a8a8a;-webkit-text-stroke:0.25px;transform:scaleX(0.9375);">Sync:</div>
<div class="t" id="ws" style="left:802.00px;top:465.29px;font-size:6.5px;color:#eeeeee;font-weight:bold;-webkit-text-stroke:0.15px;transform:scaleX(0.9273);">Workspace saved</div>
</body></html>
